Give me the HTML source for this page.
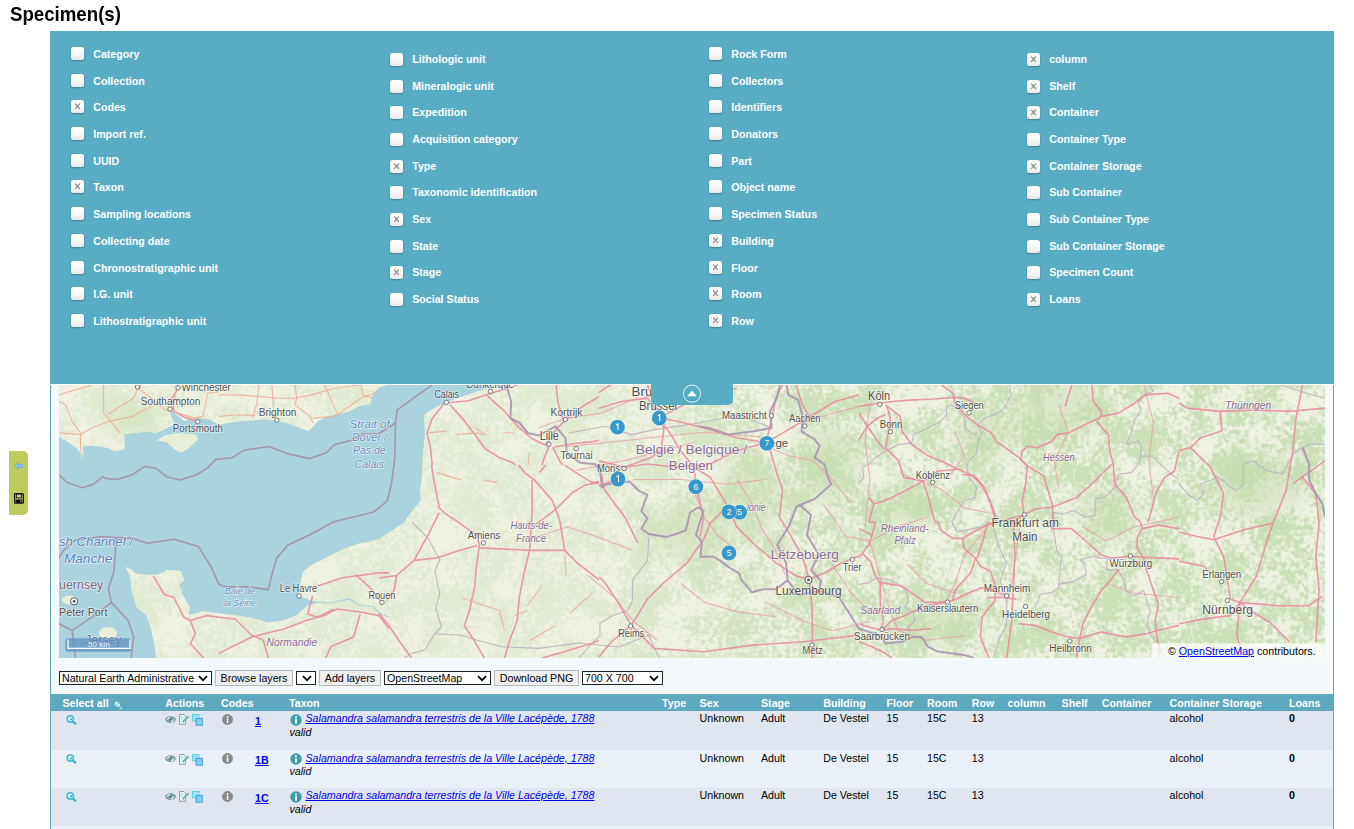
<!DOCTYPE html>
<html><head><meta charset="utf-8"><title>Specimen(s)</title><style>
*{box-sizing:border-box}
html,body{margin:0;padding:0;background:#fff;width:1354px;height:829px;overflow:hidden;font-family:"Liberation Sans",sans-serif}
.abs{position:absolute}
h1{position:absolute;left:10px;top:4px;margin:0;font:bold 18.67px/22px "Liberation Sans",sans-serif;color:#000;transform:scale(1.0,1.12);transform-origin:0 17.5px}
#panel{position:absolute;left:50px;top:31px;width:1284px;height:353px;background:#58adc5}
.cb{position:absolute;width:13px;height:13px;border-radius:2.5px;background:linear-gradient(#fff,#fafafa 45%,#e9e9e9);box-shadow:0 1px 2px rgba(0,0,0,.28)}
.lbl{position:absolute;font:bold 10.67px/14px "Liberation Sans",sans-serif;color:#fff;white-space:nowrap}
#wrap{position:absolute;left:50px;top:385px;width:1284px;height:444px;background:#f4fafb;border-left:1px solid #5aa7bd;border-right:1px solid #5aa7bd}
#map{position:absolute;left:59px;top:385px;width:1266px;height:273px;overflow:hidden;background:#eef0dd}
#tab{position:absolute;left:651px;top:384px;width:82px;height:21px;background:#58adc5;border-radius:0 0 5px 5px}
#side{position:absolute;left:9px;top:451px;width:19px;height:64px;background:#bfcb5d;border-radius:0 5px 5px 0}
.sel{position:absolute;top:671px;height:14px;border:1px solid #222;background:#fff;font:10.67px/12px "Liberation Sans",sans-serif;color:#000;padding-left:2px;white-space:nowrap;overflow:hidden}
.sel svg{position:absolute;right:3px;top:3px}
.btn{position:absolute;top:670px;height:16px;border:1px solid #b9b9b9;background:#efefef;font:10.67px/14px "Liberation Sans",sans-serif;color:#000;text-align:center;white-space:nowrap}
#thead{position:absolute;left:51px;top:694px;width:1282px;height:17px;background:#5ea9bf}
.th{position:absolute;top:697px;font:bold 10.67px/13px "Liberation Sans",sans-serif;color:#fff;white-space:nowrap}
.row{position:absolute;left:51px;width:1282px;height:38.5px}
.td{position:absolute;font:10.67px/13px "Liberation Sans",sans-serif;color:#000;white-space:nowrap}
a{color:#00e}
</style></head>
<body>
<h1>Specimen(s)</h1>
<div id="panel"></div>
<div class="cb" style="left:71px;top:47.0px"></div>
<div class="lbl" style="left:93.2px;top:46.5px">Category</div>
<div class="cb" style="left:71px;top:74.0px"></div>
<div class="lbl" style="left:93.2px;top:73.5px">Collection</div>
<div class="cb on" style="left:71px;top:100.0px"><svg width="13" height="13" viewBox="0 0 13 13" style="position:absolute;left:0;top:0"><path d="M4.1 3.7 L8.9 8.9 M8.9 3.7 L4.1 8.9" stroke="#858585" stroke-width="1.25"/></svg></div>
<div class="lbl" style="left:93.2px;top:99.5px">Codes</div>
<div class="cb" style="left:71px;top:127.0px"></div>
<div class="lbl" style="left:93.2px;top:126.5px">Import ref.</div>
<div class="cb" style="left:71px;top:154.0px"></div>
<div class="lbl" style="left:93.2px;top:153.5px">UUID</div>
<div class="cb on" style="left:71px;top:180.0px"><svg width="13" height="13" viewBox="0 0 13 13" style="position:absolute;left:0;top:0"><path d="M4.1 3.7 L8.9 8.9 M8.9 3.7 L4.1 8.9" stroke="#858585" stroke-width="1.25"/></svg></div>
<div class="lbl" style="left:93.2px;top:179.5px">Taxon</div>
<div class="cb" style="left:71px;top:207.0px"></div>
<div class="lbl" style="left:93.2px;top:206.5px">Sampling locations</div>
<div class="cb" style="left:71px;top:234.0px"></div>
<div class="lbl" style="left:93.2px;top:233.5px">Collecting date</div>
<div class="cb" style="left:71px;top:261.0px"></div>
<div class="lbl" style="left:93.2px;top:260.5px">Chronostratigraphic unit</div>
<div class="cb" style="left:71px;top:287.0px"></div>
<div class="lbl" style="left:93.2px;top:286.5px">I.G. unit</div>
<div class="cb" style="left:71px;top:314.0px"></div>
<div class="lbl" style="left:93.2px;top:313.5px">Lithostratigraphic unit</div>
<div class="cb" style="left:390px;top:53.0px"></div>
<div class="lbl" style="left:412.2px;top:51.5px">Lithologic unit</div>
<div class="cb" style="left:390px;top:80.0px"></div>
<div class="lbl" style="left:412.2px;top:78.5px">Mineralogic unit</div>
<div class="cb" style="left:390px;top:106.0px"></div>
<div class="lbl" style="left:412.2px;top:104.5px">Expedition</div>
<div class="cb" style="left:390px;top:133.0px"></div>
<div class="lbl" style="left:412.2px;top:131.5px">Acquisition category</div>
<div class="cb on" style="left:390px;top:160.0px"><svg width="13" height="13" viewBox="0 0 13 13" style="position:absolute;left:0;top:0"><path d="M4.1 3.7 L8.9 8.9 M8.9 3.7 L4.1 8.9" stroke="#858585" stroke-width="1.25"/></svg></div>
<div class="lbl" style="left:412.2px;top:158.5px">Type</div>
<div class="cb" style="left:390px;top:186.0px"></div>
<div class="lbl" style="left:412.2px;top:184.5px">Taxonomic identification</div>
<div class="cb on" style="left:390px;top:213.0px"><svg width="13" height="13" viewBox="0 0 13 13" style="position:absolute;left:0;top:0"><path d="M4.1 3.7 L8.9 8.9 M8.9 3.7 L4.1 8.9" stroke="#858585" stroke-width="1.25"/></svg></div>
<div class="lbl" style="left:412.2px;top:211.5px">Sex</div>
<div class="cb" style="left:390px;top:240.0px"></div>
<div class="lbl" style="left:412.2px;top:238.5px">State</div>
<div class="cb on" style="left:390px;top:266.0px"><svg width="13" height="13" viewBox="0 0 13 13" style="position:absolute;left:0;top:0"><path d="M4.1 3.7 L8.9 8.9 M8.9 3.7 L4.1 8.9" stroke="#858585" stroke-width="1.25"/></svg></div>
<div class="lbl" style="left:412.2px;top:264.5px">Stage</div>
<div class="cb" style="left:390px;top:293.0px"></div>
<div class="lbl" style="left:412.2px;top:291.5px">Social Status</div>
<div class="cb" style="left:709px;top:47.0px"></div>
<div class="lbl" style="left:731.2px;top:46.5px">Rock Form</div>
<div class="cb" style="left:709px;top:74.0px"></div>
<div class="lbl" style="left:731.2px;top:73.5px">Collectors</div>
<div class="cb" style="left:709px;top:100.0px"></div>
<div class="lbl" style="left:731.2px;top:99.5px">Identifiers</div>
<div class="cb" style="left:709px;top:127.0px"></div>
<div class="lbl" style="left:731.2px;top:126.5px">Donators</div>
<div class="cb" style="left:709px;top:154.0px"></div>
<div class="lbl" style="left:731.2px;top:153.5px">Part</div>
<div class="cb" style="left:709px;top:180.0px"></div>
<div class="lbl" style="left:731.2px;top:179.5px">Object name</div>
<div class="cb" style="left:709px;top:207.0px"></div>
<div class="lbl" style="left:731.2px;top:206.5px">Specimen Status</div>
<div class="cb on" style="left:709px;top:234.0px"><svg width="13" height="13" viewBox="0 0 13 13" style="position:absolute;left:0;top:0"><path d="M4.1 3.7 L8.9 8.9 M8.9 3.7 L4.1 8.9" stroke="#858585" stroke-width="1.25"/></svg></div>
<div class="lbl" style="left:731.2px;top:233.5px">Building</div>
<div class="cb on" style="left:709px;top:261.0px"><svg width="13" height="13" viewBox="0 0 13 13" style="position:absolute;left:0;top:0"><path d="M4.1 3.7 L8.9 8.9 M8.9 3.7 L4.1 8.9" stroke="#858585" stroke-width="1.25"/></svg></div>
<div class="lbl" style="left:731.2px;top:260.5px">Floor</div>
<div class="cb on" style="left:709px;top:287.0px"><svg width="13" height="13" viewBox="0 0 13 13" style="position:absolute;left:0;top:0"><path d="M4.1 3.7 L8.9 8.9 M8.9 3.7 L4.1 8.9" stroke="#858585" stroke-width="1.25"/></svg></div>
<div class="lbl" style="left:731.2px;top:286.5px">Room</div>
<div class="cb on" style="left:709px;top:314.0px"><svg width="13" height="13" viewBox="0 0 13 13" style="position:absolute;left:0;top:0"><path d="M4.1 3.7 L8.9 8.9 M8.9 3.7 L4.1 8.9" stroke="#858585" stroke-width="1.25"/></svg></div>
<div class="lbl" style="left:731.2px;top:313.5px">Row</div>
<div class="cb on" style="left:1027px;top:53.0px"><svg width="13" height="13" viewBox="0 0 13 13" style="position:absolute;left:0;top:0"><path d="M4.1 3.7 L8.9 8.9 M8.9 3.7 L4.1 8.9" stroke="#858585" stroke-width="1.25"/></svg></div>
<div class="lbl" style="left:1049.2px;top:51.5px">column</div>
<div class="cb on" style="left:1027px;top:80.0px"><svg width="13" height="13" viewBox="0 0 13 13" style="position:absolute;left:0;top:0"><path d="M4.1 3.7 L8.9 8.9 M8.9 3.7 L4.1 8.9" stroke="#858585" stroke-width="1.25"/></svg></div>
<div class="lbl" style="left:1049.2px;top:78.5px">Shelf</div>
<div class="cb on" style="left:1027px;top:106.0px"><svg width="13" height="13" viewBox="0 0 13 13" style="position:absolute;left:0;top:0"><path d="M4.1 3.7 L8.9 8.9 M8.9 3.7 L4.1 8.9" stroke="#858585" stroke-width="1.25"/></svg></div>
<div class="lbl" style="left:1049.2px;top:104.5px">Container</div>
<div class="cb" style="left:1027px;top:133.0px"></div>
<div class="lbl" style="left:1049.2px;top:131.5px">Container Type</div>
<div class="cb on" style="left:1027px;top:160.0px"><svg width="13" height="13" viewBox="0 0 13 13" style="position:absolute;left:0;top:0"><path d="M4.1 3.7 L8.9 8.9 M8.9 3.7 L4.1 8.9" stroke="#858585" stroke-width="1.25"/></svg></div>
<div class="lbl" style="left:1049.2px;top:158.5px">Container Storage</div>
<div class="cb" style="left:1027px;top:186.0px"></div>
<div class="lbl" style="left:1049.2px;top:184.5px">Sub Container</div>
<div class="cb" style="left:1027px;top:213.0px"></div>
<div class="lbl" style="left:1049.2px;top:211.5px">Sub Container Type</div>
<div class="cb" style="left:1027px;top:240.0px"></div>
<div class="lbl" style="left:1049.2px;top:238.5px">Sub Container Storage</div>
<div class="cb" style="left:1027px;top:266.0px"></div>
<div class="lbl" style="left:1049.2px;top:264.5px">Specimen Count</div>
<div class="cb on" style="left:1027px;top:293.0px"><svg width="13" height="13" viewBox="0 0 13 13" style="position:absolute;left:0;top:0"><path d="M4.1 3.7 L8.9 8.9 M8.9 3.7 L4.1 8.9" stroke="#858585" stroke-width="1.25"/></svg></div>
<div class="lbl" style="left:1049.2px;top:291.5px">Loans</div>
<div id="wrap"></div>
<div id="map"><svg width="1266" height="273" viewBox="0 0 1266 273" style="display:block">
<defs>
<filter id="tex" x="0" y="0" width="100%" height="100%" color-interpolation-filters="sRGB">
<feTurbulence type="fractalNoise" baseFrequency="0.22" numOctaves="2" seed="3" result="fine"/>
<feTurbulence type="fractalNoise" baseFrequency="0.03" numOctaves="2" seed="11" result="coarse"/>
<feComposite in="fine" in2="coarse" operator="arithmetic" k1="0" k2="0.55" k3="0.6" k4="-0.02" result="mix"/>
<feColorMatrix in="mix" type="matrix" values="0 0 0 0 0.74  0 0 0 0 0.85  0 0 0 0 0.65  -6 0 0 0 3.4" result="g"/>
<feComposite in="g" in2="SourceAlpha" operator="in"/>
</filter>
<linearGradient id="eastg" x1="0" y1="0" x2="1" y2="0"><stop offset="0" stop-color="#fff" stop-opacity="0.35"/><stop offset="0.4" stop-color="#fff" stop-opacity="0.4"/><stop offset="0.6" stop-color="#fff" stop-opacity="0.9"/><stop offset="1" stop-color="#fff" stop-opacity="1"/></linearGradient>
<mask id="em"><rect width="1266" height="273" fill="url(#eastg)"/></mask>
<filter id="blr" x="-50%" y="-50%" width="200%" height="200%"><feGaussianBlur stdDeviation="9"/></filter>
<mask id="fm"><g filter="url(#blr)" fill="#fff">
<ellipse cx="630" cy="145" rx="38" ry="28"/><ellipse cx="690" cy="110" rx="30" ry="40"/>
<ellipse cx="890" cy="235" rx="35" ry="22"/><ellipse cx="850" cy="125" rx="30" ry="20"/>
<ellipse cx="1050" cy="130" rx="30" ry="25"/><ellipse cx="1000" cy="25" rx="50" ry="25"/>
<ellipse cx="770" cy="80" rx="30" ry="40"/><ellipse cx="70" cy="35" rx="30" ry="15"/>
<ellipse cx="1200" cy="100" rx="45" ry="30"/><ellipse cx="925" cy="50" rx="30" ry="25"/>
</g></mask>
</defs>
<rect width="1266" height="273" fill="#eff2e1"/>
<g mask="url(#em)"><rect width="1266" height="273" fill="#000" filter="url(#tex)" opacity="0.75"/></g><g mask="url(#fm)"><rect width="1266" height="273" fill="#c3d9ab" opacity="0.45"/></g>
<polygon points="0.0,273.0 0.0,52.6 10.0,58.0 16.5,62.8 19.8,66.0 23.0,74.4 24.8,71.0 24.0,62.0 33.0,61.0 49.6,63.6 57.0,67.0 66.0,64.5 66.0,49.6 74.0,48.8 87.6,47.0 97.5,48.8 105.8,44.6 115.7,39.7 110.7,24.8 125.6,36.4 137.0,33.0 150.0,35.0 160.0,40.0 176.5,37.2 206.3,34.7 226.0,38.0 239.3,43.0 250.0,46.6 259.2,36.4 267.4,32.2 289.0,27.3 300.5,21.5 312.0,19.8 313.7,10.0 320.0,3.3 330.0,0.0 446.0,0.0 427.4,3.3 414.0,7.4 399.0,12.4 386.0,17.4 374.5,23.0 364.6,29.8 365.5,48.0 363.8,66.0 363.0,77.7 362.0,95.9 360.5,105.8 361.3,115.7 353.0,125.6 344.8,137.0 330.0,146.9 320.0,153.4 299.6,158.3 283.2,164.1 266.7,172.3 252.0,179.7 243.7,186.3 240.5,199.4 238.8,210.9 252.0,215.8 258.5,217.5 248.7,220.0 238.8,229.0 225.7,234.7 209.3,237.2 192.8,232.2 176.4,229.8 160.0,228.1 144.5,225.7 129.7,229.8 131.4,222.4 124.8,210.9 120.7,200.2 125.6,194.5 121.5,185.4 108.4,184.6 98.5,189.2 88.7,189.5 77.2,187.9 72.2,183.8 65.7,181.3 70.6,191.2 72.2,206.0 77.2,222.4 87.0,230.6 92.0,245.4 95.2,261.8 96.9,273.0" fill="#aad3df" stroke="#a5cdd9" stroke-width="0.6"/>
<polygon points="97.5,55.4 105.8,50.4 119.0,48.0 137.0,49.6 138.8,54.5 130.6,62.8 122.3,67.8 115.7,64.5 107.4,57.0" fill="#e8efd8"/>
<ellipse cx="11" cy="215" rx="8" ry="4.5" fill="#e8efd8"/><ellipse cx="49" cy="248" rx="9" ry="6" fill="#e8efd8"/><ellipse cx="44" cy="175" rx="3" ry="1.5" fill="#e8efd8"/>
<polyline points="252,217 270,218 290,214 300,220 315,222 320,228 330,232" fill="none" stroke="#aad3df" stroke-width="1.2"/>
<polyline points="0.0,90.0 8.3,97.5 23.0,102.8 34.7,99.2 43.8,91.7 46.3,93.4 57.9,94.5 72.7,90.0 86.0,81.3 97.5,83.5 107.4,91.7 120.7,95.0 137.2,90.0 148.8,82.6 157.0,74.4 173.2,72.7 184.8,65.3 209.6,61.5 231.0,69.4 251.0,73.6 267.4,67.8 275.7,59.5 292.2,55.4 303.8,48.8 320.0,48.5 336.5,38.0" fill="none" stroke="#a496ae" stroke-width="1.6" stroke-linejoin="round"/>
<polyline points="372.9,0.0 338.2,24.8 336.5,38.0 335.7,74.4 332.4,99.2 328.3,115.7 320.0,123.0 313.7,127.3 274.0,137.0 252.0,149.3 229.0,160.0 217.5,173.1 212.5,191.2 209.3,204.6 189.6,201.9 168.2,201.9 160.0,199.4 152.7,183.0 139.6,161.6 115.0,154.2 88.7,158.3 73.9,153.4 41.0,151.8 16.4,155.0 5.0,165.0 0.0,173.0" fill="none" stroke="#a496ae" stroke-width="1.6" stroke-linejoin="round"/>
<polyline points="56.7,152.0 56.7,161.6 55.0,186.3 49.3,204.3 52.5,217.5 69.0,235.5 74.7,252.0 72.2,273.0" fill="none" stroke="#a496ae" stroke-width="1.6" stroke-linejoin="round"/>
<polyline points="52.5,217.5 32.8,232.2 13.1,245.4 0.0,238.8" fill="none" stroke="#a496ae" stroke-width="1.6" stroke-linejoin="round"/>
<polyline points="13.1,245.4 16.4,273.0" fill="none" stroke="#a496ae" stroke-width="1.6" stroke-linejoin="round"/>
<polyline points="352.8,137.0 369.3,153.4 380.8,174.8 375.8,186.3 380.8,209.2 376.6,222.4 382.4,242.0 375.8,248.7 366.0,265.0 352.8,268.4 345.0,273.0" fill="none" stroke="#c0b0c4" stroke-width="1.1" stroke-linejoin="round" opacity="0.9"/>
<polyline points="375.8,248.7 402.0,250.3 418.5,255.2 443.0,261.8 480.0,263.4 520.0,258.0 560.0,262.0 589.7,250.0 600.0,273.0" fill="none" stroke="#c0b0c4" stroke-width="1.1" stroke-linejoin="round" opacity="0.9"/>
<polyline points="509.8,48.0 546.0,41.3 572.6,49.6 595.7,44.6 640.0,38.0 680.0,30.0 712.7,43.0" fill="none" stroke="#c0b0c4" stroke-width="1.1" stroke-linejoin="round" opacity="0.9"/>
<polyline points="589.7,152.6 588.6,175.4 573.5,195.5 573.5,215.6 568.5,225.6 553.4,230.7 540.9,238.2 540.9,250.7 530.8,260.8 520.0,273.0" fill="none" stroke="#c0b0c4" stroke-width="1.1" stroke-linejoin="round" opacity="0.9"/>
<polyline points="950.4,0.0 952.1,9.9 945.5,23.1 935.5,29.8 925.6,33.1 919.0,39.7 922.3,47.9 919.0,57.9 917.4,69.4 910.7,74.4 907.4,82.6 910.7,92.6 917.4,102.5 915.7,112.4 905.8,115.7 899.2,125.6 892.6,137.0 898.5,146.8 914.9,143.6 928.0,140.3" fill="none" stroke="#c0b0c4" stroke-width="1.1" stroke-linejoin="round" opacity="0.9"/>
<polyline points="800.0,97.5 805.0,92.6 803.3,82.6 809.9,79.3 816.5,72.7 826.4,66.1 839.7,59.5 852.9,57.9 854.5,49.6 869.4,43.0 881.0,36.4 887.6,29.8 887.6,21.5 892.6,19.8 899.2,24.8 905.8,33.1 905.8,43.0 915.7,49.6 919.0,47.9" fill="none" stroke="#c0b0c4" stroke-width="1.1" stroke-linejoin="round" opacity="0.9"/>
<polyline points="800.0,199.4 809.8,197.7 818.0,192.8 829.5,194.4 839.4,199.4 847.6,205.9 849.2,215.8 845.9,222.3 854.2,227.3 855.8,235.5 849.2,242.0 850.9,250.2" fill="none" stroke="#c0b0c4" stroke-width="1.1" stroke-linejoin="round" opacity="0.9"/>
<polyline points="934.6,141.9 939.5,161.6 947.7,178.0 944.4,186.2 941.1,196.1 944.4,205.9 947.7,219.0 947.7,238.7 941.1,251.9 934.6,273.0" fill="none" stroke="#c0b0c4" stroke-width="1.1" stroke-linejoin="round" opacity="0.9"/>
<polyline points="1090.6,0.0 1093.9,6.6 1085.6,9.9 1079.0,18.2 1082.3,24.8 1075.7,34.7 1072.4,46.3 1067.4,59.5 1079.0,56.2 1082.3,62.8 1080.7,77.7 1072.4,87.6 1059.2,89.3 1055.9,102.5 1046.0,112.4 1036.0,114.0 1036.0,130.6 1026.1,132.2 1014.5,125.6 1004.6,128.9 993.1,127.3 994.5,143.6 997.7,164.9 1002.7,171.5 1001.0,186.2 999.4,202.6 992.8,207.6 981.3,209.2 976.4,222.3" fill="none" stroke="#c0b0c4" stroke-width="1.1" stroke-linejoin="round" opacity="0.9"/>
<polyline points="1082.3,71.1 1092.2,71.1 1105.5,82.6 1112.1,89.3 1120.0,94.2" fill="none" stroke="#c0b0c4" stroke-width="1.1" stroke-linejoin="round" opacity="0.9"/>
<polyline points="999.4,199.4 1015.8,196.1 1027.3,189.5 1025.6,178.0 1020.7,174.7 1033.8,171.5 1042.0,173.1 1048.6,173.1 1047.0,184.6 1058.5,184.6 1065.0,194.4 1066.6,205.9 1074.9,210.8 1084.7,205.9 1088.0,215.8 1091.3,225.6 1088.0,238.7 1091.3,250.2 1099.5,258.4 1105.0,273.0" fill="none" stroke="#c0b0c4" stroke-width="1.1" stroke-linejoin="round" opacity="0.9"/>
<polyline points="1221.7,0.0 1241.9,6.6 1265.6,13.2" fill="none" stroke="#c0b0c4" stroke-width="1.1" stroke-linejoin="round" opacity="0.9"/>
<polyline points="1120.0,98.3 1128.3,108.7 1138.2,115.3 1144.8,108.7 1141.5,98.8 1151.4,95.5 1158.0,92.2 1164.6,95.5 1171.2,102.1 1177.8,105.4 1184.3,98.8 1184.3,79.1 1194.2,75.8 1207.4,85.6 1223.9,88.9 1230.5,75.8 1237.0,65.9 1250.2,59.3 1266.0,59.3" fill="none" stroke="#c0b0c4" stroke-width="1.1" stroke-linejoin="round" opacity="0.9"/>
<polyline points="94.4,191.2 105.1,209.2 114.9,212.5 124.8,232.2 131.4,235.5 136.3,248.7 131.4,258.5 144.5,273.0" fill="none" stroke="#e78ea1" stroke-width="1.6" stroke-linejoin="round" opacity="0.9"/>
<polyline points="131.4,235.5 147.8,230.6 160.0,232.2 176.0,234.0 192.8,250.3 204.3,255.2 209.3,273.0" fill="none" stroke="#e78ea1" stroke-width="1.6" stroke-linejoin="round" opacity="0.9"/>
<polyline points="160.0,268.4 192.8,252.0 225.7,243.7 247.0,235.5 265.1,230.6 278.2,224.0 302.9,227.3 320.0,230.6 329.9,243.7 330.0,243.8" fill="none" stroke="#e78ea1" stroke-width="1.6" stroke-linejoin="round" opacity="0.9"/>
<polyline points="258.5,201.0 283.2,192.8 307.8,189.5 320.0,187.9 330.0,187.9" fill="none" stroke="#e78ea1" stroke-width="1.6" stroke-linejoin="round" opacity="0.9"/>
<polyline points="253.6,210.9 248.7,229.0 258.5,232.2 274.9,224.0" fill="none" stroke="#e78ea1" stroke-width="1.6" stroke-linejoin="round" opacity="0.9"/>
<polyline points="301.2,229.0 294.6,252.0 271.7,261.8 266.7,273.0" fill="none" stroke="#e78ea1" stroke-width="1.6" stroke-linejoin="round" opacity="0.9"/>
<polyline points="296.3,189.5 311.1,202.7 323.0,217.5" fill="none" stroke="#e78ea1" stroke-width="1.6" stroke-linejoin="round" opacity="0.9"/>
<polyline points="119.0,2.8 113.0,14.0 115.0,26.0 125.0,32.0 138.8,36.7" fill="none" stroke="#e78ea1" stroke-width="1.6" stroke-linejoin="round" opacity="0.9"/>
<polyline points="387.4,17.7 408.6,16.0 429.9,8.9 447.6,3.5 458.2,0.0" fill="none" stroke="#e78ea1" stroke-width="1.6" stroke-linejoin="round" opacity="0.9"/>
<polyline points="385.6,17.7 373.2,33.7 367.9,47.9 371.4,62.0 373.2,79.8 373.2,80.0" fill="none" stroke="#e78ea1" stroke-width="1.6" stroke-linejoin="round" opacity="0.9"/>
<polyline points="390.9,19.5 405.1,35.4 415.7,49.6 426.3,63.8 440.5,72.7 454.7,78.0 456.3,80.0" fill="none" stroke="#e78ea1" stroke-width="1.6" stroke-linejoin="round" opacity="0.9"/>
<polyline points="428.1,10.6 444.1,24.8 458.2,40.8 472.4,53.2 486.6,60.3" fill="none" stroke="#e78ea1" stroke-width="1.6" stroke-linejoin="round" opacity="0.9"/>
<polyline points="486.6,60.3 497.2,44.3 506.1,35.4 523.8,21.3 540.0,11.8" fill="none" stroke="#e78ea1" stroke-width="1.6" stroke-linejoin="round" opacity="0.9"/>
<polyline points="490.2,60.3 484.8,74.4 482.8,80.0" fill="none" stroke="#e78ea1" stroke-width="1.6" stroke-linejoin="round" opacity="0.9"/>
<polyline points="493.7,62.0 500.8,76.2 503.8,80.0" fill="none" stroke="#e78ea1" stroke-width="1.6" stroke-linejoin="round" opacity="0.9"/>
<polyline points="495.5,62.0 515.0,58.5 532.7,56.7 540.0,55.3" fill="none" stroke="#e78ea1" stroke-width="1.6" stroke-linejoin="round" opacity="0.9"/>
<polyline points="497.2,0.0 499.0,17.7 504.3,35.4" fill="none" stroke="#e78ea1" stroke-width="1.6" stroke-linejoin="round" opacity="0.9"/>
<polyline points="372.5,80.0 374.0,90.1 380.2,122.7 385.3,127.8 400.3,137.8 417.9,150.3 420.4,160.4 417.9,178.0 415.4,203.1 410.4,225.6 405.3,240.7 415.4,255.8 425.4,273.1" fill="none" stroke="#e78ea1" stroke-width="1.6" stroke-linejoin="round" opacity="0.9"/>
<polyline points="417.9,160.4 400.3,165.4 377.7,172.9 355.1,175.4 337.6,190.5 320.0,193.0" fill="none" stroke="#e78ea1" stroke-width="1.6" stroke-linejoin="round" opacity="0.9"/>
<polyline points="380.2,127.8 370.2,147.8 357.7,170.4 355.1,175.4" fill="none" stroke="#e78ea1" stroke-width="1.6" stroke-linejoin="round" opacity="0.9"/>
<polyline points="337.6,190.5 335.1,205.6 327.5,215.6" fill="none" stroke="#e78ea1" stroke-width="1.6" stroke-linejoin="round" opacity="0.9"/>
<polyline points="473.1,95.1 473.1,127.8 470.6,165.4 465.6,185.5 460.6,210.6 458.1,235.7 450.5,255.8 445.5,273.1" fill="none" stroke="#e78ea1" stroke-width="1.6" stroke-linejoin="round" opacity="0.9"/>
<polyline points="420.4,162.9 445.5,164.1 470.6,165.4 505.7,165.4 518.3,178.0 540.0,194.8" fill="none" stroke="#e78ea1" stroke-width="1.6" stroke-linejoin="round" opacity="0.9"/>
<polyline points="459.5,80.0 465.6,87.6 475.6,95.1 493.2,115.2 500.7,135.3 505.7,165.4" fill="none" stroke="#e78ea1" stroke-width="1.6" stroke-linejoin="round" opacity="0.9"/>
<polyline points="475.6,140.3 495.7,125.2 513.3,107.7 525.8,100.1 538.4,97.6 540.0,96.5" fill="none" stroke="#e78ea1" stroke-width="1.6" stroke-linejoin="round" opacity="0.9"/>
<polyline points="480.6,87.6 486.7,80.0" fill="none" stroke="#e78ea1" stroke-width="1.6" stroke-linejoin="round" opacity="0.9"/>
<polyline points="505.7,80.0 505.7,80.1 520.8,90.1 533.4,97.6 540.0,99.0" fill="none" stroke="#e78ea1" stroke-width="1.6" stroke-linejoin="round" opacity="0.9"/>
<polyline points="540.0,255.4 533.4,258.3 508.3,265.8 483.2,273.1" fill="none" stroke="#e78ea1" stroke-width="1.6" stroke-linejoin="round" opacity="0.9"/>
<polyline points="533.4,97.6 540.0,96.7" fill="none" stroke="#e78ea1" stroke-width="1.6" stroke-linejoin="round" opacity="0.9"/>
<polyline points="320.0,228.2 330.0,240.7 340.1,255.8 352.6,273.1" fill="none" stroke="#e78ea1" stroke-width="1.6" stroke-linejoin="round" opacity="0.9"/>
<polyline points="540.0,23.2 562.3,16.5 588.6,13.2 600.2,29.6" fill="none" stroke="#e78ea1" stroke-width="1.6" stroke-linejoin="round" opacity="0.9"/>
<polyline points="540.0,7.5 545.8,3.3 552.4,0.0" fill="none" stroke="#e78ea1" stroke-width="1.6" stroke-linejoin="round" opacity="0.9"/>
<polyline points="540.0,75.9 565.6,82.3 591.9,72.4 601.8,65.8 605.1,42.8 600.2,32.9" fill="none" stroke="#e78ea1" stroke-width="1.6" stroke-linejoin="round" opacity="0.9"/>
<polyline points="600.2,32.9 618.3,36.2 644.6,42.8 677.5,52.7 707.2,57.6" fill="none" stroke="#e78ea1" stroke-width="1.6" stroke-linejoin="round" opacity="0.9"/>
<polyline points="600.2,32.9 611.7,49.4 621.6,65.8 634.7,82.3 651.2,92.2 661.1,108.6 670.9,125.1 677.5,141.6 694.0,158.0 717.0,177.8 736.8,190.9 750.0,194.2" fill="none" stroke="#e78ea1" stroke-width="1.6" stroke-linejoin="round" opacity="0.9"/>
<polyline points="565.6,82.3 588.6,79.0 618.3,82.3 651.2,79.0 677.5,65.8 707.2,57.6" fill="none" stroke="#e78ea1" stroke-width="1.6" stroke-linejoin="round" opacity="0.9"/>
<polyline points="707.2,57.6 726.9,46.1 743.4,36.2 759.8,26.3 776.3,16.5 800.0,9.9" fill="none" stroke="#e78ea1" stroke-width="1.6" stroke-linejoin="round" opacity="0.9"/>
<polyline points="707.2,57.6 710.5,42.8 713.7,29.6 717.0,13.2 723.6,0.0" fill="none" stroke="#e78ea1" stroke-width="1.6" stroke-linejoin="round" opacity="0.9"/>
<polyline points="710.5,62.6 717.0,85.6 723.6,105.3 720.3,131.7 730.2,148.1 743.4,171.2 750.0,194.2" fill="none" stroke="#e78ea1" stroke-width="1.6" stroke-linejoin="round" opacity="0.9"/>
<polyline points="736.8,0.0 743.4,19.8 753.3,36.2" fill="none" stroke="#e78ea1" stroke-width="1.6" stroke-linejoin="round" opacity="0.9"/>
<polyline points="750.0,194.2 753.3,223.9 753.3,256.8 753.3,272.9" fill="none" stroke="#e78ea1" stroke-width="1.6" stroke-linejoin="round" opacity="0.9"/>
<polyline points="572.2,240.3 588.6,214.0 605.1,197.5 628.1,177.8 644.6,154.7 651.2,138.3 664.4,125.1" fill="none" stroke="#e78ea1" stroke-width="1.6" stroke-linejoin="round" opacity="0.9"/>
<polyline points="572.2,240.3 552.4,256.8 540.0,272.0" fill="none" stroke="#e78ea1" stroke-width="1.6" stroke-linejoin="round" opacity="0.9"/>
<polyline points="572.2,240.3 595.2,263.4 644.6,266.7 694.0,260.1 743.4,256.8 800.0,250.2" fill="none" stroke="#e78ea1" stroke-width="1.6" stroke-linejoin="round" opacity="0.9"/>
<polyline points="540.0,191.7 545.8,197.5 559.0,217.3 572.2,240.3" fill="none" stroke="#e78ea1" stroke-width="1.6" stroke-linejoin="round" opacity="0.9"/>
<polyline points="540.0,101.1 562.3,92.2" fill="none" stroke="#e78ea1" stroke-width="1.6" stroke-linejoin="round" opacity="0.9"/>
<polyline points="750.0,194.2 766.4,187.7 782.9,177.8 800.0,171.2" fill="none" stroke="#e78ea1" stroke-width="1.6" stroke-linejoin="round" opacity="0.9"/>
<polyline points="634.7,82.3 638.0,105.3 644.6,131.7 641.3,151.4" fill="none" stroke="#e78ea1" stroke-width="1.6" stroke-linejoin="round" opacity="0.9"/>
<polyline points="600.2,32.9 588.6,0.0" fill="none" stroke="#e78ea1" stroke-width="1.6" stroke-linejoin="round" opacity="0.9"/>
<polyline points="600.2,32.9 624.9,19.8 651.2,9.9 677.5,3.3" fill="none" stroke="#e78ea1" stroke-width="1.6" stroke-linejoin="round" opacity="0.9"/>
<polyline points="540.0,79.1 545.8,105.3 565.6,131.7 578.8,158.0" fill="none" stroke="#e78ea1" stroke-width="1.6" stroke-linejoin="round" opacity="0.9"/>
<polyline points="819.8,18.2 833.1,16.5 854.5,14.9 874.4,14.0 894.2,12.4 905.8,13.2 915.7,18.2" fill="none" stroke="#e78ea1" stroke-width="1.6" stroke-linejoin="round" opacity="0.9"/>
<polyline points="882.6,0.0 894.2,8.3 895.9,18.2 907.4,31.4 920.7,41.3 932.2,47.9 937.2,56.2 948.8,64.5 960.0,72.7 968.3,81.0" fill="none" stroke="#e78ea1" stroke-width="1.6" stroke-linejoin="round" opacity="0.9"/>
<polyline points="826.4,19.8 841.3,31.4 843.0,46.3 852.9,59.5 869.4,71.1 886.0,77.7 899.2,84.3 912.4,90.1 922.3,99.2 930.6,115.7 937.2,137.0 928.0,138.6" fill="none" stroke="#e78ea1" stroke-width="1.6" stroke-linejoin="round" opacity="0.9"/>
<polyline points="800.0,21.5 819.8,18.2" fill="none" stroke="#e78ea1" stroke-width="1.6" stroke-linejoin="round" opacity="0.9"/>
<polyline points="828.1,21.5 831.4,33.1 829.8,46.3 826.4,62.8 833.1,69.4 839.7,76.0 844.6,92.6 864.5,95.9 879.3,86.0 899.2,84.3" fill="none" stroke="#e78ea1" stroke-width="1.6" stroke-linejoin="round" opacity="0.9"/>
<polyline points="800.0,28.1 808.3,41.3 816.5,52.9 824.8,64.5" fill="none" stroke="#e78ea1" stroke-width="1.6" stroke-linejoin="round" opacity="0.9"/>
<polyline points="800.0,54.5 808.3,41.3 818.2,33.1 826.4,29.8" fill="none" stroke="#e78ea1" stroke-width="1.6" stroke-linejoin="round" opacity="0.9"/>
<polyline points="864.5,95.9 846.3,105.8 829.8,114.0 814.9,119.0 809.9,112.4" fill="none" stroke="#e78ea1" stroke-width="1.6" stroke-linejoin="round" opacity="0.9"/>
<polyline points="814.9,119.0 809.9,137.0 816.4,137.0 813.1,150.1 809.8,160.0 803.3,168.2 800.0,171.5" fill="none" stroke="#e78ea1" stroke-width="1.6" stroke-linejoin="round" opacity="0.9"/>
<polyline points="864.5,97.5 869.4,112.4 872.7,125.6 876.0,137.0 878.8,137.0 882.0,145.2 893.5,153.4 903.4,153.4 905.0,163.3 916.5,173.1 911.6,187.9 896.8,204.3 893.5,215.8" fill="none" stroke="#e78ea1" stroke-width="1.6" stroke-linejoin="round" opacity="0.9"/>
<polyline points="902.5,89.3 915.7,90.9 925.6,102.5 932.2,119.0 937.2,132.2" fill="none" stroke="#e78ea1" stroke-width="1.6" stroke-linejoin="round" opacity="0.9"/>
<polyline points="800.0,143.6 813.1,150.1" fill="none" stroke="#e78ea1" stroke-width="1.6" stroke-linejoin="round" opacity="0.9"/>
<polyline points="803.3,168.2 811.5,176.4 816.4,191.2 821.3,197.7 832.8,199.4 842.7,201.0 852.5,207.6 865.6,217.4 878.8,217.4 893.5,215.8 906.7,209.2 923.1,202.6 947.7,210.8" fill="none" stroke="#e78ea1" stroke-width="1.6" stroke-linejoin="round" opacity="0.9"/>
<polyline points="916.5,173.1 921.4,181.3 931.3,186.2 936.2,199.4 936.2,215.8 928.0,225.6 923.1,232.2 921.4,251.9 928.0,268.3 930.0,273.0" fill="none" stroke="#e78ea1" stroke-width="1.6" stroke-linejoin="round" opacity="0.9"/>
<polyline points="903.4,153.4 914.9,146.8 928.0,140.3 965.5,129.6" fill="none" stroke="#e78ea1" stroke-width="1.6" stroke-linejoin="round" opacity="0.9"/>
<polyline points="928.0,138.6 924.7,153.4 918.1,173.1" fill="none" stroke="#e78ea1" stroke-width="1.6" stroke-linejoin="round" opacity="0.9"/>
<polyline points="821.3,197.7 821.3,222.3 824.6,235.5 821.3,245.3" fill="none" stroke="#e78ea1" stroke-width="1.6" stroke-linejoin="round" opacity="0.9"/>
<polyline points="823.0,245.3 832.8,235.5 846.0,230.5 854.2,226.4 868.9,220.7 888.6,217.1" fill="none" stroke="#e78ea1" stroke-width="1.6" stroke-linejoin="round" opacity="0.9"/>
<polyline points="800.0,238.7 809.8,242.0 823.0,245.3 832.8,243.7 854.2,245.3 872.2,243.7" fill="none" stroke="#e78ea1" stroke-width="1.6" stroke-linejoin="round" opacity="0.9"/>
<polyline points="800.0,256.8 813.1,261.7 826.3,268.3 832.8,273.0" fill="none" stroke="#e78ea1" stroke-width="1.6" stroke-linejoin="round" opacity="0.9"/>
<polyline points="965.0,129.6 954.3,137.0 955.9,169.8 954.3,202.6 952.6,235.5 947.7,273.0" fill="none" stroke="#e78ea1" stroke-width="1.6" stroke-linejoin="round" opacity="0.9"/>
<polyline points="928.0,212.5 944.4,212.5 957.5,214.1" fill="none" stroke="#e78ea1" stroke-width="1.6" stroke-linejoin="round" opacity="0.9"/>
<polyline points="1032.7,0.0 1034.4,16.5 1042.6,26.4 1041.0,33.1 1029.4,38.0 1009.6,47.9 998.0,49.6 993.1,56.2 978.2,62.8 968.3,61.2 963.3,66.1 961.7,74.4 968.3,81.0 966.6,99.2 963.3,115.7 965.0,129.6" fill="none" stroke="#e78ea1" stroke-width="1.6" stroke-linejoin="round" opacity="0.9"/>
<polyline points="1042.6,31.4 1059.2,28.1 1075.7,18.2 1085.6,9.9 1108.8,8.3 1120.0,13.2" fill="none" stroke="#e78ea1" stroke-width="1.6" stroke-linejoin="round" opacity="0.9"/>
<polyline points="1037.7,36.4 1049.3,49.6 1050.9,66.1 1054.2,79.3 1055.9,99.2 1067.4,112.4 1075.7,132.2 1081.4,137.0 1083.1,143.6 1078.1,153.4 1078.1,163.3 1084.7,173.1 1088.0,186.2 1094.6,205.9 1099.5,219.0 1096.2,235.5 1097.8,251.9 1099.5,258.4 1100.0,273.0" fill="none" stroke="#e78ea1" stroke-width="1.6" stroke-linejoin="round" opacity="0.9"/>
<polyline points="1052.6,79.3 1034.4,97.5 1017.9,112.4 993.1,122.3 976.5,124.0 965.5,129.6" fill="none" stroke="#e78ea1" stroke-width="1.6" stroke-linejoin="round" opacity="0.9"/>
<polyline points="968.3,81.0 984.8,90.9 988.1,102.5 993.1,119.0 994.7,137.0 992.8,143.6 1012.5,143.6 1025.6,155.0 1042.0,169.8 1051.9,173.1 1071.6,171.5 1084.7,172.3 1104.4,173.1 1120.0,173.9" fill="none" stroke="#e78ea1" stroke-width="1.6" stroke-linejoin="round" opacity="0.9"/>
<polyline points="1012.9,0.0 1009.6,9.9 1006.3,21.5" fill="none" stroke="#e78ea1" stroke-width="1.6" stroke-linejoin="round" opacity="0.9"/>
<polyline points="1120.0,66.1 1115.4,86.0 1105.5,92.6 1097.2,107.4 1090.6,132.2 1088.9,137.0" fill="none" stroke="#e78ea1" stroke-width="1.6" stroke-linejoin="round" opacity="0.9"/>
<polyline points="1083.1,143.6 1099.5,140.3 1120.0,143.6" fill="none" stroke="#e78ea1" stroke-width="1.6" stroke-linejoin="round" opacity="0.9"/>
<polyline points="1060.1,184.6 1051.9,194.4 1042.0,205.9 1032.2,222.3 1024.0,238.7 1020.7,253.5 1017.4,273.0" fill="none" stroke="#e78ea1" stroke-width="1.6" stroke-linejoin="round" opacity="0.9"/>
<polyline points="960.0,238.7 976.4,240.4 992.8,246.9 1009.2,251.9 1020.7,253.5 1042.0,246.9 1066.6,251.9 1088.0,248.6 1099.5,245.3 1120.0,240.4" fill="none" stroke="#e78ea1" stroke-width="1.6" stroke-linejoin="round" opacity="0.9"/>
<polyline points="1120.0,18.0 1128.3,23.1 1161.3,26.4 1194.2,24.7 1230.5,26.4 1266.0,23.1" fill="none" stroke="#e78ea1" stroke-width="1.6" stroke-linejoin="round" opacity="0.9"/>
<polyline points="1161.3,26.4 1162.9,46.1 1141.5,52.7 1131.6,62.6 1120.0,65.5" fill="none" stroke="#e78ea1" stroke-width="1.6" stroke-linejoin="round" opacity="0.9"/>
<polyline points="1131.6,62.6 1151.4,82.3 1164.6,108.7 1161.3,131.8 1154.7,151.5 1164.6,171.3 1167.9,191.0 1171.2,214.1 1181.0,217.4 1197.5,191.0 1207.4,158.1 1214.0,138.3 1227.2,105.4 1233.7,65.9 1237.0,32.9 1243.6,0.0" fill="none" stroke="#e78ea1" stroke-width="1.6" stroke-linejoin="round" opacity="0.9"/>
<polyline points="1120.0,147.0 1138.2,151.5 1154.7,154.8 1184.3,144.9 1214.0,138.3" fill="none" stroke="#e78ea1" stroke-width="1.6" stroke-linejoin="round" opacity="0.9"/>
<polyline points="1120.0,176.2 1144.8,181.2 1151.4,187.7" fill="none" stroke="#e78ea1" stroke-width="1.6" stroke-linejoin="round" opacity="0.9"/>
<polyline points="1120.0,238.8 1128.3,237.2 1144.8,233.9 1171.2,230.6 1181.0,217.4" fill="none" stroke="#e78ea1" stroke-width="1.6" stroke-linejoin="round" opacity="0.9"/>
<polyline points="1181.0,217.4 1194.2,227.3 1210.7,237.2 1230.5,256.9" fill="none" stroke="#e78ea1" stroke-width="1.6" stroke-linejoin="round" opacity="0.9"/>
<polyline points="1181.0,217.4 1217.3,220.7 1250.2,220.7 1263.4,210.8" fill="none" stroke="#e78ea1" stroke-width="1.6" stroke-linejoin="round" opacity="0.9"/>
<polyline points="1243.6,92.2 1256.8,108.7 1260.1,138.3 1256.8,171.3 1260.1,204.2 1256.8,256.9" fill="none" stroke="#e78ea1" stroke-width="1.6" stroke-linejoin="round" opacity="0.9"/>
<polyline points="1181.0,217.4 1177.8,250.3 1184.3,273.1" fill="none" stroke="#e78ea1" stroke-width="1.6" stroke-linejoin="round" opacity="0.9"/>
<polyline points="1233.7,98.8 1266.0,75.8" fill="none" stroke="#e78ea1" stroke-width="1.6" stroke-linejoin="round" opacity="0.9"/>
<polyline points="480.0,42.5 508.4,33.1 541.4,28.4 574.5,14.2 602.9,9.5" fill="none" stroke="#e995a6" stroke-width="1.1" stroke-linejoin="round" opacity="0.7"/>
<polyline points="508.4,61.4 555.6,56.7 598.2,52.0 645.4,47.3 702.2,52.0" fill="none" stroke="#e995a6" stroke-width="1.1" stroke-linejoin="round" opacity="0.7"/>
<polyline points="517.8,85.1 565.1,75.6 602.9,66.2 636.0,56.7" fill="none" stroke="#e995a6" stroke-width="1.1" stroke-linejoin="round" opacity="0.7"/>
<polyline points="574.5,94.5 621.8,94.5 669.1,99.3 706.9,94.5" fill="none" stroke="#e995a6" stroke-width="1.1" stroke-linejoin="round" opacity="0.7"/>
<polyline points="636.0,108.7 645.4,132.3 659.6,151.3 678.5,165.4" fill="none" stroke="#e995a6" stroke-width="1.1" stroke-linejoin="round" opacity="0.7"/>
<polyline points="678.5,94.5 692.7,118.2 702.2,141.8 716.3,165.4 725.8,189.1" fill="none" stroke="#e995a6" stroke-width="1.1" stroke-linejoin="round" opacity="0.7"/>
<polyline points="706.9,61.4 730.5,70.9 754.2,75.6 773.1,94.5 792.0,118.2" fill="none" stroke="#e995a6" stroke-width="1.1" stroke-linejoin="round" opacity="0.7"/>
<polyline points="744.7,37.8 773.1,28.4 810.9,18.9" fill="none" stroke="#e995a6" stroke-width="1.1" stroke-linejoin="round" opacity="0.7"/>
<polyline points="810.9,18.9 806.1,56.7 810.9,94.5 806.1,141.8" fill="none" stroke="#e995a6" stroke-width="1.1" stroke-linejoin="round" opacity="0.7"/>
<polyline points="763.6,118.2 787.2,151.3 810.9,156.0 839.2,141.8 867.6,132.3" fill="none" stroke="#e995a6" stroke-width="1.1" stroke-linejoin="round" opacity="0.7"/>
<polyline points="810.9,156.0 820.3,189.1 829.8,222.2 839.2,245.8" fill="none" stroke="#e995a6" stroke-width="1.1" stroke-linejoin="round" opacity="0.7"/>
<polyline points="844.0,89.8 881.8,104.0 905.4,122.9 929.0,127.6" fill="none" stroke="#e995a6" stroke-width="1.1" stroke-linejoin="round" opacity="0.7"/>
<polyline points="896.0,47.3 905.4,70.9 891.2,89.8" fill="none" stroke="#e995a6" stroke-width="1.1" stroke-linejoin="round" opacity="0.7"/>
<polyline points="929.0,141.8 905.4,170.2 896.0,198.5 886.5,217.4" fill="none" stroke="#e995a6" stroke-width="1.1" stroke-linejoin="round" opacity="0.7"/>
<polyline points="962.1,132.3 957.4,165.4 952.7,198.5 947.9,217.4" fill="none" stroke="#e995a6" stroke-width="1.1" stroke-linejoin="round" opacity="0.7"/>
<polyline points="999.9,18.9 1009.4,47.3 995.2,75.6 999.9,104.0" fill="none" stroke="#e995a6" stroke-width="1.1" stroke-linejoin="round" opacity="0.7"/>
<polyline points="1023.6,141.8 1047.2,156.0 1075.6,141.8 1120.0,132.3" fill="none" stroke="#e995a6" stroke-width="1.1" stroke-linejoin="round" opacity="0.7"/>
<polyline points="1047.2,198.5 1075.6,208.0 1120.0,212.7" fill="none" stroke="#e995a6" stroke-width="1.1" stroke-linejoin="round" opacity="0.7"/>
<polyline points="1085.0,0.0 1094.5,37.8 1089.7,75.6 1094.5,113.4" fill="none" stroke="#e995a6" stroke-width="1.1" stroke-linejoin="round" opacity="0.7"/>
<polyline points="480.0,151.3 508.4,141.8 536.7,151.3 574.5,165.4" fill="none" stroke="#e995a6" stroke-width="1.1" stroke-linejoin="round" opacity="0.7"/>
<polyline points="527.3,189.1 555.6,212.7 574.5,236.3 598.2,255.2" fill="none" stroke="#e995a6" stroke-width="1.1" stroke-linejoin="round" opacity="0.7"/>
<polyline points="621.8,198.5 645.4,217.4 678.5,226.9 716.3,231.6" fill="none" stroke="#e995a6" stroke-width="1.1" stroke-linejoin="round" opacity="0.7"/>
<polyline points="706.9,217.4 744.7,236.3 773.1,245.8 810.9,236.3" fill="none" stroke="#e995a6" stroke-width="1.1" stroke-linejoin="round" opacity="0.7"/>
<polyline points="773.1,179.6 792.0,208.0 810.9,226.9" fill="none" stroke="#e995a6" stroke-width="1.1" stroke-linejoin="round" opacity="0.7"/>
<polyline points="848.7,179.6 867.6,198.5 896.0,208.0" fill="none" stroke="#e995a6" stroke-width="1.1" stroke-linejoin="round" opacity="0.7"/>
<polyline points="839.2,245.8 867.6,255.2 905.4,250.5" fill="none" stroke="#e995a6" stroke-width="1.1" stroke-linejoin="round" opacity="0.7"/>
<polyline points="0.0,9.9 9.9,6.6 33.1,0.0" fill="none" stroke="#f0ad94" stroke-width="1.1" stroke-linejoin="round" opacity="0.85"/>
<polyline points="0.0,16.5 6.6,19.8 13.2,36.4 21.5,47.9 21.5,62.8 23.0,72.0" fill="none" stroke="#f0ad94" stroke-width="1.1" stroke-linejoin="round" opacity="0.85"/>
<polyline points="0.0,47.9 21.5,49.6 33.1,43.0 49.6,36.4 74.4,31.4 79.3,28.1 92.6,21.5" fill="none" stroke="#f0ad94" stroke-width="1.1" stroke-linejoin="round" opacity="0.85"/>
<polyline points="44.6,0.0 44.6,28.1 54.5,39.7 61.2,47.9" fill="none" stroke="#f0ad94" stroke-width="1.1" stroke-linejoin="round" opacity="0.85"/>
<polyline points="47.9,29.8 74.4,13.2 79.3,3.3 82.6,0.0" fill="none" stroke="#f0ad94" stroke-width="1.1" stroke-linejoin="round" opacity="0.85"/>
<polyline points="79.3,3.3 92.6,13.2 105.8,24.8 119.0,28.1 135.5,33.1 143.8,31.4 148.8,8.3 160.0,6.6" fill="none" stroke="#f0ad94" stroke-width="1.1" stroke-linejoin="round" opacity="0.85"/>
<polyline points="119.0,0.0 115.7,9.9 119.0,23.1" fill="none" stroke="#f0ad94" stroke-width="1.1" stroke-linejoin="round" opacity="0.85"/>
<polyline points="160.0,9.9 181.5,9.9 201.3,11.6 219.5,13.2 236.0,13.2 252.6,9.9 275.7,3.3 302.1,0.0" fill="none" stroke="#f0ad94" stroke-width="1.1" stroke-linejoin="round" opacity="0.85"/>
<polyline points="199.7,0.0 198.0,18.2 194.7,28.1 193.1,33.1" fill="none" stroke="#f0ad94" stroke-width="1.1" stroke-linejoin="round" opacity="0.85"/>
<polyline points="212.9,0.0 214.5,21.5" fill="none" stroke="#f0ad94" stroke-width="1.1" stroke-linejoin="round" opacity="0.85"/>
<polyline points="236.0,0.0 237.7,13.2 236.0,19.8 250.9,31.4 254.2,38.0" fill="none" stroke="#f0ad94" stroke-width="1.1" stroke-linejoin="round" opacity="0.85"/>
<polyline points="265.8,0.0 275.7,23.1 279.0,29.8" fill="none" stroke="#f0ad94" stroke-width="1.1" stroke-linejoin="round" opacity="0.85"/>
<polyline points="302.1,0.0 303.8,9.9 313.7,13.2" fill="none" stroke="#f0ad94" stroke-width="1.1" stroke-linejoin="round" opacity="0.85"/>
<polyline points="160.0,31.4 179.8,29.8 196.4,30.6" fill="none" stroke="#f0ad94" stroke-width="1.1" stroke-linejoin="round" opacity="0.85"/>
<polyline points="254.2,33.1 275.7,31.4 285.6,24.8 302.1,13.2 318.7,6.6" fill="none" stroke="#f0ad94" stroke-width="1.1" stroke-linejoin="round" opacity="0.85"/>
<polyline points="367.9,47.9 387.4,46.1" fill="none" stroke="#f0ad94" stroke-width="1.1" stroke-linejoin="round" opacity="0.85"/>
<polyline points="398.0,49.6 415.7,47.9 426.3,49.6" fill="none" stroke="#f0ad94" stroke-width="1.1" stroke-linejoin="round" opacity="0.85"/>
<polyline points="415.7,42.5 426.3,49.6" fill="none" stroke="#f0ad94" stroke-width="1.1" stroke-linejoin="round" opacity="0.85"/>
<polyline points="444.1,47.9 454.7,47.9" fill="none" stroke="#f0ad94" stroke-width="1.1" stroke-linejoin="round" opacity="0.85"/>
<polyline points="440.5,79.8 441.1,80.0" fill="none" stroke="#f0ad94" stroke-width="1.1" stroke-linejoin="round" opacity="0.85"/>
<polyline points="470.7,67.4 469.1,80.0" fill="none" stroke="#f0ad94" stroke-width="1.1" stroke-linejoin="round" opacity="0.85"/>
<polyline points="377.7,87.6 402.8,95.1" fill="none" stroke="#f0ad94" stroke-width="1.1" stroke-linejoin="round" opacity="0.85"/>
<polyline points="425.4,95.1 438.0,97.6" fill="none" stroke="#f0ad94" stroke-width="1.1" stroke-linejoin="round" opacity="0.85"/>
<polyline points="402.8,213.1 440.5,225.6" fill="none" stroke="#f0ad94" stroke-width="1.1" stroke-linejoin="round" opacity="0.85"/>
<polyline points="468.1,220.6 483.2,200.5" fill="none" stroke="#f0ad94" stroke-width="1.1" stroke-linejoin="round" opacity="0.85"/>
<polyline points="510.8,228.2 533.4,208.1" fill="none" stroke="#f0ad94" stroke-width="1.1" stroke-linejoin="round" opacity="0.85"/>
<polyline points="455.5,230.7 468.1,225.6" fill="none" stroke="#f0ad94" stroke-width="1.1" stroke-linejoin="round" opacity="0.85"/>
<polyline points="470.6,255.8 495.7,240.7" fill="none" stroke="#f0ad94" stroke-width="1.1" stroke-linejoin="round" opacity="0.85"/>
<polyline points="505.7,170.4 507.0,190.5" fill="none" stroke="#f0ad94" stroke-width="1.1" stroke-linejoin="round" opacity="0.85"/>
<polyline points="440.5,225.6 445.5,245.7" fill="none" stroke="#f0ad94" stroke-width="1.1" stroke-linejoin="round" opacity="0.85"/>
<polyline points="447.3,0.0 452.2,16.5 451.4,33.0 460.5,38.0 468.8,48.0 480.0,50.4 496.5,41.3 506.4,52.9 508.0,69.4 521.3,77.7 536.2,79.3 541.2,86.0 542.8,102.5 546.9,99.4 558.7,98.0 570.5,96.5 579.4,105.3 588.3,109.8 582.4,126.0 588.3,133.4 582.4,143.7 589.7,148.9 607.5,151.9 614.9,149.7 626.7,145.2 631.1,127.5 639.2,122.3 644.4,126.0 637.0,149.7 642.9,157.0 641.4,171.8 654.7,171.8 662.1,176.2 669.5,182.1 679.8,188.1 682.8,195.4 693.1,207.3 703.5,204.3 716.8,204.3 728.6,195.4 727.1,177.7 718.3,160.0 730.1,140.8 737.5,121.6 741.0,120.0" fill="none" stroke="#ab93b3" stroke-width="2" stroke-linejoin="round" opacity="0.9"/>
<polyline points="640.0,41.3 650.0,43.0 669.8,49.6 694.5,46.3 712.7,43.0 711.0,26.4 717.7,13.2 721.0,0.0" fill="none" stroke="#ab93b3" stroke-width="2" stroke-linejoin="round" opacity="0.9"/>
<polyline points="727.6,0.0 729.3,9.9 739.2,14.9 744.0,33.0 742.5,46.3 755.7,54.5 760.7,61.2 755.7,72.7 765.6,79.3 769.0,92.6 772.2,99.2 755.7,114.0 741.0,120.0" fill="none" stroke="#ab93b3" stroke-width="2" stroke-linejoin="round" opacity="0.9"/>
<polyline points="741.0,120.0 752.0,130.0 748.0,150.0 760.0,170.0 752.0,185.0 762.0,196.0 760.0,206.0 740.0,210.0 728.6,195.4" fill="none" stroke="#ab93b3" stroke-width="2" stroke-linejoin="round" opacity="0.9"/>
<polyline points="760.0,206.0 780.0,212.0 800.0,243.7 809.8,246.9 823.0,251.9 826.3,258.4 842.7,256.8 854.2,251.9 862.4,251.9 868.9,261.7 878.8,266.6 891.9,268.3 905.0,269.9 914.9,273.0" fill="none" stroke="#ab93b3" stroke-width="2" stroke-linejoin="round" opacity="0.9"/>
<polyline points="1243.6,62.6 1250.2,79.1 1250.2,95.5 1256.8,108.7 1263.4,118.6 1266.0,131.8" fill="none" stroke="#ab93b3" stroke-width="2" stroke-linejoin="round" opacity="0.9"/>
<circle cx="119" cy="2.8" r="2.2" fill="#fff" stroke="#666" stroke-width="0.9"/>
<circle cx="111" cy="24" r="2.2" fill="#fff" stroke="#666" stroke-width="0.9"/>
<circle cx="138.8" cy="36.7" r="2.2" fill="#fff" stroke="#666" stroke-width="0.9"/>
<circle cx="217.9" cy="35.2" r="2.2" fill="#fff" stroke="#666" stroke-width="0.9"/>
<circle cx="387.4" cy="17.4" r="2.2" fill="#fff" stroke="#666" stroke-width="0.9"/>
<circle cx="431.6" cy="6.3" r="2.2" fill="#fff" stroke="#666" stroke-width="0.9"/>
<circle cx="240" cy="210.9" r="2.2" fill="#fff" stroke="#666" stroke-width="0.9"/>
<circle cx="323" cy="217.5" r="2.2" fill="#fff" stroke="#666" stroke-width="0.9"/>
<circle cx="424.3" cy="158" r="2.2" fill="#fff" stroke="#666" stroke-width="0.9"/>
<circle cx="506.4" cy="34.4" r="2.2" fill="#fff" stroke="#666" stroke-width="0.9"/>
<circle cx="489.9" cy="59.2" r="2.2" fill="#fff" stroke="#666" stroke-width="0.9"/>
<circle cx="517.2" cy="63.6" r="2.2" fill="#fff" stroke="#666" stroke-width="0.9"/>
<circle cx="565.1" cy="83.5" r="2.2" fill="#fff" stroke="#666" stroke-width="0.9"/>
<circle cx="712.4" cy="30.6" r="2.2" fill="#fff" stroke="#666" stroke-width="0.9"/>
<circle cx="745.8" cy="41" r="2.2" fill="#fff" stroke="#666" stroke-width="0.9"/>
<circle cx="571.7" cy="241" r="2.2" fill="#fff" stroke="#666" stroke-width="0.9"/>
<circle cx="753" cy="260" r="2.2" fill="#fff" stroke="#666" stroke-width="0.9"/>
<circle cx="793.3" cy="174.4" r="2.2" fill="#fff" stroke="#666" stroke-width="0.9"/>
<circle cx="820.8" cy="19.4" r="2.2" fill="#fff" stroke="#666" stroke-width="0.9"/>
<circle cx="831.4" cy="46.6" r="2.2" fill="#fff" stroke="#666" stroke-width="0.9"/>
<circle cx="909.9" cy="27.9" r="2.2" fill="#fff" stroke="#666" stroke-width="0.9"/>
<circle cx="873.8" cy="97.4" r="2.2" fill="#fff" stroke="#666" stroke-width="0.9"/>
<circle cx="965.5" cy="129.6" r="2.2" fill="#fff" stroke="#666" stroke-width="0.9"/>
<circle cx="1071.3" cy="171" r="2.2" fill="#fff" stroke="#666" stroke-width="0.9"/>
<circle cx="1162.6" cy="196.6" r="2.2" fill="#fff" stroke="#666" stroke-width="0.9"/>
<circle cx="1168.3" cy="215.5" r="2.2" fill="#fff" stroke="#666" stroke-width="0.9"/>
<circle cx="947.7" cy="210.8" r="2.2" fill="#fff" stroke="#666" stroke-width="0.9"/>
<circle cx="966.6" cy="221.5" r="2.2" fill="#fff" stroke="#666" stroke-width="0.9"/>
<circle cx="823" cy="244.5" r="2.2" fill="#fff" stroke="#666" stroke-width="0.9"/>
<circle cx="888.6" cy="217.1" r="2.2" fill="#fff" stroke="#666" stroke-width="0.9"/>
<circle cx="1010.9" cy="256" r="2.2" fill="#fff" stroke="#666" stroke-width="0.9"/>
<circle cx="78.5" cy="2" r="2.2" fill="#fff" stroke="#666" stroke-width="0.9"/>
<circle cx="15.1" cy="216.3" r="3.6" fill="#fff" stroke="#555" stroke-width="1"/><circle cx="15.1" cy="216.3" r="1.4" fill="#555"/>
<circle cx="749.5" cy="194.9" r="3.6" fill="#fff" stroke="#555" stroke-width="1"/><circle cx="749.5" cy="194.9" r="1.4" fill="#555"/>
<text x="122.5" y="6" font-size="10" font-style="normal" fill="#505050" textLength="49.4" lengthAdjust="spacingAndGlyphs" stroke="#fff" stroke-opacity="0.6" stroke-width="1.6" paint-order="stroke" stroke-linejoin="round">Winchester</text>
<text x="81.8" y="20.2" font-size="10" font-style="normal" fill="#505050" textLength="59.5" lengthAdjust="spacingAndGlyphs" stroke="#fff" stroke-opacity="0.6" stroke-width="1.6" paint-order="stroke" stroke-linejoin="round">Southampton</text>
<text x="113.7" y="47.1" font-size="10" font-style="normal" fill="#505050" textLength="50.3" lengthAdjust="spacingAndGlyphs" stroke="#fff" stroke-opacity="0.6" stroke-width="1.6" paint-order="stroke" stroke-linejoin="round">Portsmouth</text>
<text x="199.7" y="31.4" font-size="10" font-style="normal" fill="#505050" textLength="37.7" lengthAdjust="spacingAndGlyphs" stroke="#fff" stroke-opacity="0.6" stroke-width="1.6" paint-order="stroke" stroke-linejoin="round">Brighton</text>
<text x="290.6" y="43" font-size="10.5" font-style="italic" fill="#6a8cc0" textLength="40.1" lengthAdjust="spacingAndGlyphs" stroke="#fff" stroke-opacity="0.6" stroke-width="1.6" paint-order="stroke" stroke-linejoin="round">Strait of</text>
<text x="293" y="56.2" font-size="10.5" font-style="italic" fill="#6a8cc0" textLength="35.0" lengthAdjust="spacingAndGlyphs" stroke="#fff" stroke-opacity="0.6" stroke-width="1.6" paint-order="stroke" stroke-linejoin="round">Dover /</text>
<text x="293.9" y="69.4" font-size="10.5" font-style="italic" fill="#6a8cc0" textLength="32.7" lengthAdjust="spacingAndGlyphs" stroke="#fff" stroke-opacity="0.6" stroke-width="1.6" paint-order="stroke" stroke-linejoin="round">Pas de</text>
<text x="295.5" y="82.6" font-size="10.5" font-style="italic" fill="#6a8cc0" textLength="29.5" lengthAdjust="spacingAndGlyphs" stroke="#fff" stroke-opacity="0.6" stroke-width="1.6" paint-order="stroke" stroke-linejoin="round">Calais</text>
<text x="375.4" y="13.2" font-size="10" font-style="normal" fill="#505050" textLength="24.6" lengthAdjust="spacingAndGlyphs" stroke="#fff" stroke-opacity="0.6" stroke-width="1.6" paint-order="stroke" stroke-linejoin="round">Calais</text>
<text x="407.6" y="2.5" font-size="10" font-style="normal" fill="#505050" textLength="47.4" lengthAdjust="spacingAndGlyphs" stroke="#fff" stroke-opacity="0.6" stroke-width="1.6" paint-order="stroke" stroke-linejoin="round">Dunkerque</text>
<text x="0" y="161.3" font-size="13" font-style="italic" fill="#5d83bd" textLength="73.9" lengthAdjust="spacingAndGlyphs" stroke="#fff" stroke-opacity="0.6" stroke-width="1.6" paint-order="stroke" stroke-linejoin="round">sh Channel /</text>
<text x="4.9" y="178" font-size="13" font-style="italic" fill="#5d83bd" textLength="48.5" lengthAdjust="spacingAndGlyphs" stroke="#fff" stroke-opacity="0.6" stroke-width="1.6" paint-order="stroke" stroke-linejoin="round">Manche</text>
<text x="0" y="204.3" font-size="12" font-style="normal" fill="#7f667f" textLength="44.3" lengthAdjust="spacingAndGlyphs" stroke="#fff" stroke-opacity="0.6" stroke-width="1.6" paint-order="stroke" stroke-linejoin="round">uernsey</text>
<text x="0" y="230.6" font-size="10.5" font-style="normal" fill="#505050" textLength="48.4" lengthAdjust="spacingAndGlyphs" stroke="#fff" stroke-opacity="0.6" stroke-width="1.6" paint-order="stroke" stroke-linejoin="round">Peter Port</text>
<text x="26.3" y="259.3" font-size="12" font-style="normal" fill="#7f667f" textLength="36.1" lengthAdjust="spacingAndGlyphs" stroke="#fff" stroke-opacity="0.6" stroke-width="1.6" paint-order="stroke" stroke-linejoin="round">Jersey</text>
<text x="165.7" y="209.2" font-size="9.5" font-style="italic" fill="#6a8cc0" textLength="30.4" lengthAdjust="spacingAndGlyphs" stroke="#fff" stroke-opacity="0.6" stroke-width="1.6" paint-order="stroke" stroke-linejoin="round">Baie de</text>
<text x="164.9" y="220.7" font-size="9.5" font-style="italic" fill="#6a8cc0" textLength="32.1" lengthAdjust="spacingAndGlyphs" stroke="#fff" stroke-opacity="0.6" stroke-width="1.6" paint-order="stroke" stroke-linejoin="round">la Seine</text>
<text x="220.8" y="207.3" font-size="10" font-style="normal" fill="#505050" textLength="37.4" lengthAdjust="spacingAndGlyphs" stroke="#fff" stroke-opacity="0.6" stroke-width="1.6" paint-order="stroke" stroke-linejoin="round">Le Havre</text>
<text x="207.6" y="261" font-size="11" font-style="italic" fill="#8a6c93" textLength="50.6" lengthAdjust="spacingAndGlyphs" stroke="#fff" stroke-opacity="0.6" stroke-width="1.6" paint-order="stroke" stroke-linejoin="round">Normandie</text>
<text x="309.4" y="213.8" font-size="10.5" font-style="normal" fill="#505050" textLength="27.0" lengthAdjust="spacingAndGlyphs" stroke="#fff" stroke-opacity="0.6" stroke-width="1.6" paint-order="stroke" stroke-linejoin="round">Rouen</text>
<text x="408.7" y="154.2" font-size="10.5" font-style="normal" fill="#505050" textLength="32.5" lengthAdjust="spacingAndGlyphs" stroke="#fff" stroke-opacity="0.6" stroke-width="1.6" paint-order="stroke" stroke-linejoin="round">Amiens</text>
<text x="451.4" y="144.4" font-size="11" font-style="italic" fill="#8a6c93" textLength="41.6" lengthAdjust="spacingAndGlyphs" stroke="#fff" stroke-opacity="0.6" stroke-width="1.6" paint-order="stroke" stroke-linejoin="round">Hauts-de-</text>
<text x="457" y="156.7" font-size="11" font-style="italic" fill="#8a6c93" textLength="30.0" lengthAdjust="spacingAndGlyphs" stroke="#fff" stroke-opacity="0.6" stroke-width="1.6" paint-order="stroke" stroke-linejoin="round">France</text>
<text x="491.6" y="30.6" font-size="10.5" font-style="normal" fill="#505050" textLength="31.7" lengthAdjust="spacingAndGlyphs" stroke="#fff" stroke-opacity="0.6" stroke-width="1.6" paint-order="stroke" stroke-linejoin="round">Kortrijk</text>
<text x="480.8" y="54.5" font-size="12" font-style="normal" fill="#505050" textLength="19.0" lengthAdjust="spacingAndGlyphs" stroke="#fff" stroke-opacity="0.6" stroke-width="1.6" paint-order="stroke" stroke-linejoin="round">Lille</text>
<text x="501.5" y="73.6" font-size="10.5" font-style="normal" fill="#505050" textLength="32.2" lengthAdjust="spacingAndGlyphs" stroke="#fff" stroke-opacity="0.6" stroke-width="1.6" paint-order="stroke" stroke-linejoin="round">Tournai</text>
<text x="537.9" y="86.8" font-size="10.5" font-style="normal" fill="#505050" textLength="23.1" lengthAdjust="spacingAndGlyphs" stroke="#fff" stroke-opacity="0.6" stroke-width="1.6" paint-order="stroke" stroke-linejoin="round">Mons</text>
<text x="572.6" y="10.7" font-size="12" font-style="normal" fill="#505050" textLength="27.4" lengthAdjust="spacingAndGlyphs" stroke="#fff" stroke-opacity="0.6" stroke-width="1.6" paint-order="stroke" stroke-linejoin="round">Brux</text>
<text x="580" y="24.8" font-size="12" font-style="normal" fill="#505050" textLength="38.0" lengthAdjust="spacingAndGlyphs" stroke="#fff" stroke-opacity="0.6" stroke-width="1.6" paint-order="stroke" stroke-linejoin="round">Brussel</text>
<text x="576.7" y="69.4" font-size="13.5" font-style="normal" fill="#8b6b93" textLength="111.3" lengthAdjust="spacingAndGlyphs" stroke="#fff" stroke-opacity="0.6" stroke-width="1.6" paint-order="stroke" stroke-linejoin="round">België / Belgique /</text>
<text x="609.8" y="85.1" font-size="13.5" font-style="normal" fill="#8b6b93" textLength="44.2" lengthAdjust="spacingAndGlyphs" stroke="#fff" stroke-opacity="0.6" stroke-width="1.6" paint-order="stroke" stroke-linejoin="round">Belgien</text>
<text x="663" y="33.9" font-size="10.5" font-style="normal" fill="#505050" textLength="44.8" lengthAdjust="spacingAndGlyphs" stroke="#fff" stroke-opacity="0.6" stroke-width="1.6" paint-order="stroke" stroke-linejoin="round">Maastricht</text>
<text x="730" y="37.2" font-size="10.5" font-style="normal" fill="#505050" textLength="31.5" lengthAdjust="spacingAndGlyphs" stroke="#fff" stroke-opacity="0.6" stroke-width="1.6" paint-order="stroke" stroke-linejoin="round">Aachen</text>
<text x="701" y="62" font-size="10.5" font-style="normal" fill="#505050" textLength="28.3" lengthAdjust="spacingAndGlyphs" stroke="#fff" stroke-opacity="0.6" stroke-width="1.6" paint-order="stroke" stroke-linejoin="round">Liège</text>
<text x="688" y="126.4" font-size="11" font-style="italic" fill="#8a6c93" textLength="18.5" lengthAdjust="spacingAndGlyphs" stroke="#fff" stroke-opacity="0.6" stroke-width="1.6" paint-order="stroke" stroke-linejoin="round">lonie</text>
<text x="711.7" y="173.6" font-size="13" font-style="normal" fill="#8b6b93" textLength="68.1" lengthAdjust="spacingAndGlyphs" stroke="#fff" stroke-opacity="0.6" stroke-width="1.6" paint-order="stroke" stroke-linejoin="round">Lëtzebuerg</text>
<text x="716.4" y="210.3" font-size="12" font-style="normal" fill="#505050" textLength="66.2" lengthAdjust="spacingAndGlyphs" stroke="#fff" stroke-opacity="0.6" stroke-width="1.6" paint-order="stroke" stroke-linejoin="round">Luxembourg</text>
<text x="559.2" y="251.7" font-size="10.5" font-style="normal" fill="#505050" textLength="26.0" lengthAdjust="spacingAndGlyphs" stroke="#fff" stroke-opacity="0.6" stroke-width="1.6" paint-order="stroke" stroke-linejoin="round">Reims</text>
<text x="743.6" y="269.4" font-size="10.5" font-style="normal" fill="#505050" textLength="20.1" lengthAdjust="spacingAndGlyphs" stroke="#fff" stroke-opacity="0.6" stroke-width="1.6" paint-order="stroke" stroke-linejoin="round">Metz</text>
<text x="783.7" y="185.5" font-size="10" font-style="normal" fill="#505050" textLength="18.8" lengthAdjust="spacingAndGlyphs" stroke="#fff" stroke-opacity="0.6" stroke-width="1.6" paint-order="stroke" stroke-linejoin="round">Trier</text>
<text x="809" y="14.7" font-size="12" font-style="normal" fill="#505050" textLength="22.2" lengthAdjust="spacingAndGlyphs" stroke="#fff" stroke-opacity="0.6" stroke-width="1.6" paint-order="stroke" stroke-linejoin="round">Köln</text>
<text x="820.8" y="43" font-size="10.5" font-style="normal" fill="#505050" textLength="22.5" lengthAdjust="spacingAndGlyphs" stroke="#fff" stroke-opacity="0.6" stroke-width="1.6" paint-order="stroke" stroke-linejoin="round">Bonn</text>
<text x="895.7" y="24.1" font-size="10" font-style="normal" fill="#505050" textLength="29.1" lengthAdjust="spacingAndGlyphs" stroke="#fff" stroke-opacity="0.6" stroke-width="1.6" paint-order="stroke" stroke-linejoin="round">Siegen</text>
<text x="856.7" y="94.1" font-size="10.5" font-style="normal" fill="#505050" textLength="34.3" lengthAdjust="spacingAndGlyphs" stroke="#fff" stroke-opacity="0.6" stroke-width="1.6" paint-order="stroke" stroke-linejoin="round">Koblenz</text>
<text x="984" y="76.1" font-size="11" font-style="italic" fill="#8a6c93" textLength="31.6" lengthAdjust="spacingAndGlyphs" stroke="#fff" stroke-opacity="0.6" stroke-width="1.6" paint-order="stroke" stroke-linejoin="round">Hessen</text>
<text x="932.4" y="141.7" font-size="12" font-style="normal" fill="#505050" textLength="67.4" lengthAdjust="spacingAndGlyphs" stroke="#fff" stroke-opacity="0.6" stroke-width="1.6" paint-order="stroke" stroke-linejoin="round">Frankfurt am</text>
<text x="953.2" y="156.4" font-size="12" font-style="normal" fill="#505050" textLength="25.3" lengthAdjust="spacingAndGlyphs" stroke="#fff" stroke-opacity="0.6" stroke-width="1.6" paint-order="stroke" stroke-linejoin="round">Main</text>
<text x="821.7" y="146.5" font-size="11" font-style="italic" fill="#8a6c93" textLength="48.0" lengthAdjust="spacingAndGlyphs" stroke="#fff" stroke-opacity="0.6" stroke-width="1.6" paint-order="stroke" stroke-linejoin="round">Rheinland-</text>
<text x="835.5" y="158.7" font-size="11" font-style="italic" fill="#8a6c93" textLength="21.2" lengthAdjust="spacingAndGlyphs" stroke="#fff" stroke-opacity="0.6" stroke-width="1.6" paint-order="stroke" stroke-linejoin="round">Pfalz</text>
<text x="924.8" y="207.4" font-size="10.5" font-style="normal" fill="#505050" textLength="46.6" lengthAdjust="spacingAndGlyphs" stroke="#fff" stroke-opacity="0.6" stroke-width="1.6" paint-order="stroke" stroke-linejoin="round">Mannheim</text>
<text x="943" y="232.7" font-size="10.5" font-style="normal" fill="#505050" textLength="48.0" lengthAdjust="spacingAndGlyphs" stroke="#fff" stroke-opacity="0.6" stroke-width="1.6" paint-order="stroke" stroke-linejoin="round">Heidelberg</text>
<text x="857.9" y="227.3" font-size="10" font-style="normal" fill="#505050" textLength="61.5" lengthAdjust="spacingAndGlyphs" stroke="#fff" stroke-opacity="0.6" stroke-width="1.6" paint-order="stroke" stroke-linejoin="round">Kaiserslautern</text>
<text x="801.2" y="229.2" font-size="11" font-style="italic" fill="#8a6c93" textLength="40.2" lengthAdjust="spacingAndGlyphs" stroke="#fff" stroke-opacity="0.6" stroke-width="1.6" paint-order="stroke" stroke-linejoin="round">Saarland</text>
<text x="794.9" y="255.2" font-size="10" font-style="normal" fill="#505050" textLength="56.1" lengthAdjust="spacingAndGlyphs" stroke="#fff" stroke-opacity="0.6" stroke-width="1.6" paint-order="stroke" stroke-linejoin="round">Saarbrücken</text>
<text x="1050.6" y="182.4" font-size="10.5" font-style="normal" fill="#505050" textLength="42.5" lengthAdjust="spacingAndGlyphs" stroke="#fff" stroke-opacity="0.6" stroke-width="1.6" paint-order="stroke" stroke-linejoin="round">Würzburg</text>
<text x="990.3" y="266.5" font-size="10" font-style="normal" fill="#505050" textLength="42.6" lengthAdjust="spacingAndGlyphs" stroke="#fff" stroke-opacity="0.6" stroke-width="1.6" paint-order="stroke" stroke-linejoin="round">Heilbronn</text>
<text x="1166" y="23.6" font-size="10.5" font-style="italic" fill="#8a6c93" textLength="46.2" lengthAdjust="spacingAndGlyphs" stroke="#fff" stroke-opacity="0.6" stroke-width="1.6" paint-order="stroke" stroke-linejoin="round">Thüringen</text>
<text x="1143.3" y="193.2" font-size="10" font-style="normal" fill="#505050" textLength="38.8" lengthAdjust="spacingAndGlyphs" stroke="#fff" stroke-opacity="0.6" stroke-width="1.6" paint-order="stroke" stroke-linejoin="round">Erlangen</text>
<text x="1143.3" y="229" font-size="12" font-style="normal" fill="#505050" textLength="50.7" lengthAdjust="spacingAndGlyphs" stroke="#fff" stroke-opacity="0.6" stroke-width="1.6" paint-order="stroke" stroke-linejoin="round">Nürnberg</text>
<rect x="6.2" y="253.3" width="66" height="13.4" rx="3" fill="#5b8fc4" opacity="0.72"/><polyline points="9,254.6 9,263.4 71,263.4 71,254.6" fill="none" stroke="#fff" stroke-width="1.3"/><text x="40" y="262" font-size="8" fill="#fff" text-anchor="middle" opacity="0.85">50 km</text>
<circle cx="558.5" cy="42.1" r="8.1" fill="#ffffff" opacity="0.55"/><circle cx="558.5" cy="42.1" r="7.4" fill="#3799cb"/>
<path d="M556.9 39.9 L559.0 38.7 L559.0 45.1" fill="none" stroke="#fff" stroke-width="1.1"/>
<circle cx="600.3" cy="33" r="8.1" fill="#ffffff" opacity="0.55"/><circle cx="600.3" cy="33" r="7.4" fill="#3799cb"/>
<path d="M598.7 30.8 L600.8 29.6 L600.8 36.0" fill="none" stroke="#fff" stroke-width="1.1"/>
<circle cx="559" cy="94" r="8.1" fill="#ffffff" opacity="0.55"/><circle cx="559" cy="94" r="7.4" fill="#3799cb"/>
<path d="M557.4 91.8 L559.5 90.6 L559.5 97.0" fill="none" stroke="#fff" stroke-width="1.1"/>
<circle cx="636.8" cy="101.7" r="8.1" fill="#ffffff" opacity="0.55"/><circle cx="636.8" cy="101.7" r="7.4" fill="#3799cb"/>
<text x="636.8" y="104.7" font-size="8.5" fill="#fff" text-anchor="middle">6</text>
<circle cx="707.8" cy="58.3" r="8.1" fill="#ffffff" opacity="0.55"/><circle cx="707.8" cy="58.3" r="7.4" fill="#3799cb"/>
<text x="707.8" y="61.3" font-size="8.5" fill="#fff" text-anchor="middle">7</text>
<circle cx="680.6" cy="127.2" r="8.1" fill="#ffffff" opacity="0.55"/><circle cx="680.6" cy="127.2" r="7.4" fill="#3799cb"/>
<text x="680.6" y="130.2" font-size="8.5" fill="#fff" text-anchor="middle">5</text>
<circle cx="670" cy="126.8" r="8.1" fill="#ffffff" opacity="0.55"/><circle cx="670" cy="126.8" r="7.4" fill="#3799cb"/>
<text x="670" y="129.8" font-size="8.5" fill="#fff" text-anchor="middle">2</text>
<circle cx="670" cy="168" r="8.1" fill="#ffffff" opacity="0.55"/><circle cx="670" cy="168" r="7.4" fill="#3799cb"/>
<text x="670" y="171" font-size="8.5" fill="#fff" text-anchor="middle">5</text>
<rect x="1092.6" y="258.4" width="173.4" height="14.6" fill="#fff" opacity="0.75"/>
</svg></div>
<div class="abs" style="left:1168px;top:645px;font:10.67px/13px Liberation Sans,sans-serif;color:#000;white-space:nowrap">© <a href="#">OpenStreetMap</a> contributors.</div>
<div id="tab"><svg class="abs" style="left:31px;top:0" width="21" height="21" viewBox="0 0 21 21"><defs><linearGradient id="tg" x1="0" y1="0" x2="0" y2="1"><stop offset="0" stop-color="#5db3c9"/><stop offset="1" stop-color="#46a7bf"/></linearGradient></defs><circle cx="10" cy="9.6" r="8.6" fill="url(#tg)" stroke="#e9f6f9" stroke-width="1"/><path d="M5 12.3 L10 6.8 L15 12.3 Z" fill="#fff"/></svg></div>
<div id="side"><svg class="abs" style="left:5px;top:11px" width="9" height="8" viewBox="0 0 9 8"><path d="M0.5 4 L4 0.5 L4 2.5 L8.5 2.5 L8.5 5.5 L4 5.5 L4 7.5 Z" fill="#7cc0f0" stroke="#5aa5e0" stroke-width="0.6"/></svg><svg class="abs" style="left:4.5px;top:42px" width="10" height="11" viewBox="0 0 10 11"><rect x="0.6" y="0.6" width="8.8" height="9.6" rx="0.8" fill="#a9b25a" stroke="#151515" stroke-width="1.2"/><rect x="2.4" y="1.2" width="5.2" height="3.6" fill="#c9d08a" stroke="#151515" stroke-width="0.8"/><rect x="1.8" y="6.6" width="6.4" height="3.4" fill="#111"/><rect x="6.4" y="7.6" width="1" height="1.2" fill="#ddd"/></svg></div>
<div class="sel" style="left:59px;width:153px">Natural Earth Administrative<svg width="10" height="7" viewBox="0 0 10 7"><path d="M1 1.2 L5 5.2 L9 1.2" fill="none" stroke="#000" stroke-width="1.8"/></svg></div>
<div class="btn" style="left:215px;width:78px">Browse layers</div>
<div class="sel" style="left:296px;width:20px"><svg width="10" height="7" viewBox="0 0 10 7"><path d="M1 1.2 L5 5.2 L9 1.2" fill="none" stroke="#000" stroke-width="1.8"/></svg></div>
<div class="btn" style="left:319px;width:62px">Add layers</div>
<div class="sel" style="left:384px;width:107px">OpenStreetMap<svg width="10" height="7" viewBox="0 0 10 7"><path d="M1 1.2 L5 5.2 L9 1.2" fill="none" stroke="#000" stroke-width="1.8"/></svg></div>
<div class="btn" style="left:494px;width:85px">Download PNG</div>
<div class="sel" style="left:582px;width:81px">700 X 700<svg width="10" height="7" viewBox="0 0 10 7"><path d="M1 1.2 L5 5.2 L9 1.2" fill="none" stroke="#000" stroke-width="1.8"/></svg></div>
<div id="thead"></div>
<div class="th" style="left:62.5px">Select all</div>
<div class="th" style="left:165.2px">Actions</div>
<div class="th" style="left:221px">Codes</div>
<div class="th" style="left:289px">Taxon</div>
<div class="th" style="left:662px">Type</div>
<div class="th" style="left:699.6px">Sex</div>
<div class="th" style="left:761px">Stage</div>
<div class="th" style="left:823.2px">Building</div>
<div class="th" style="left:886.5px">Floor</div>
<div class="th" style="left:927px">Room</div>
<div class="th" style="left:971.8px">Row</div>
<div class="th" style="left:1007.6px">column</div>
<div class="th" style="left:1061.6px">Shelf</div>
<div class="th" style="left:1101.7px">Container</div>
<div class="th" style="left:1169.6px">Container Storage</div>
<div class="th" style="left:1289px">Loans</div>
<svg class="abs" style="left:112.5px;top:700px" width="10" height="10" viewBox="0 0 10 10"><circle cx="4" cy="4.2" r="2.9" fill="#8fd3e0" stroke="#3fb3c8" stroke-width="0.8"/><path d="M2.3 4.6 Q2.6 2.4 4.4 2" stroke="#fff" stroke-width="1.6" fill="none"/><path d="M4.6 6.3 Q6.4 6 6.6 3.8" stroke="#fff" stroke-width="1.4" fill="none"/><path d="M6.6 7 L9.2 9.2" stroke="#d6f0f5" stroke-width="1.1"/></svg>
<div class="row" style="top:826.4px;height:3px;background:#e9f0f7"></div>
<div class="row" style="top:710.7px;height:39.4px;background:#dfe6ef"></div>
<svg class="abs" style="left:65.5px;top:714.7px" width="11" height="10" viewBox="0 0 11 10"><circle cx="4.3" cy="4" r="3.2" fill="#c5e9f0" stroke="#48bccd" stroke-width="1.5"/><path d="M3 4.6 Q3.2 2.6 4.8 2.2" stroke="#ffffff" stroke-width="1" fill="none"/><path d="M4.2 5.2 L5.8 3.6" stroke="#2eb3c8" stroke-width="1.4"/><path d="M6.4 6.4 L10 9.2" stroke="#35b5c9" stroke-width="2.1"/></svg>
<svg class="abs" style="left:165px;top:715.5px" width="11" height="8" viewBox="0 0 11 8"><ellipse cx="5.5" cy="3.6" rx="5.3" ry="3.4" fill="#7c9f9f"/><path d="M2.2 3.8 Q3 1.6 5 1.6" stroke="#eef4f4" stroke-width="1.2" fill="none"/><path d="M6 5.8 Q8.2 5.6 8.6 3.4" stroke="#eef4f4" stroke-width="1.2" fill="none"/><circle cx="5.5" cy="3.6" r="1.1" fill="#4f7a7a"/></svg>
<svg class="abs" style="left:179px;top:714.1px" width="11" height="11" viewBox="0 0 11 11"><path d="M0.5 0.5 L5 0.5 L6.6 2.3 L6.6 10.3 L0.5 10.3 Z" fill="#e6f4f2" stroke="#9c9c9c" stroke-width="1"/><path d="M1.6 3 L4.4 3 M1.6 5 L4 5" stroke="#9fd6cc" stroke-width="0.8"/><path d="M3.6 8.2 L9.6 2.4" stroke="#5fb3a8" stroke-width="1.7"/></svg>
<svg class="abs" style="left:192px;top:714.1px" width="11" height="12" viewBox="0 0 11 12"><rect x="0.5" y="0.5" width="6.4" height="6.4" fill="#a9dcf8" stroke="#62d3e0" stroke-width="1"/><rect x="4.1" y="4.4" width="6.2" height="6.8" fill="#86cdf3" stroke="#3aa4e6" stroke-width="1"/></svg>
<svg class="abs" style="left:222px;top:713.5px" width="11" height="11" viewBox="0 0 11 11"><circle cx="5.5" cy="5.5" r="5.4" fill="#8a8a8a"/><rect x="4.8" y="4.6" width="1.5" height="4.4" fill="#fff"/><circle cx="5.55" cy="3" r="0.9" fill="#fff"/></svg>
<div class="td" style="left:255px;top:714.6px;font-weight:bold"><a href="#">1</a></div>
<svg class="abs" style="left:289.5px;top:713.7px" width="12" height="12" viewBox="0 0 12 12"><circle cx="6" cy="6" r="5.7" fill="#3c9ea8"/><rect x="5.1" y="5" width="1.9" height="4.6" fill="#fff"/><circle cx="6" cy="3.2" r="1.05" fill="#fff"/></svg>
<div class="td" style="left:305.5px;top:712.2px;font-style:italic"><a href="#">Salamandra salamandra terrestris de la Ville Lacépède, 1788</a></div>
<div class="td" style="left:289.5px;top:725.7px;font-style:italic">valid</div>
<div class="td" style="left:699.6px;top:712.2px">Unknown</div>
<div class="td" style="left:761px;top:712.2px">Adult</div>
<div class="td" style="left:823.2px;top:712.2px">De Vestel</div>
<div class="td" style="left:886.5px;top:712.2px">15</div>
<div class="td" style="left:927px;top:712.2px">15C</div>
<div class="td" style="left:971.8px;top:712.2px">13</div>
<div class="td" style="left:1169.6px;top:712.2px">alcohol</div>
<div class="td" style="left:1289px;top:712.2px;font-weight:bold">0</div>
<div class="row" style="top:750.1px;height:37.8px;background:#e9f0f7"></div>
<svg class="abs" style="left:65.5px;top:754.1px" width="11" height="10" viewBox="0 0 11 10"><circle cx="4.3" cy="4" r="3.2" fill="#c5e9f0" stroke="#48bccd" stroke-width="1.5"/><path d="M3 4.6 Q3.2 2.6 4.8 2.2" stroke="#ffffff" stroke-width="1" fill="none"/><path d="M4.2 5.2 L5.8 3.6" stroke="#2eb3c8" stroke-width="1.4"/><path d="M6.4 6.4 L10 9.2" stroke="#35b5c9" stroke-width="2.1"/></svg>
<svg class="abs" style="left:165px;top:754.9px" width="11" height="8" viewBox="0 0 11 8"><ellipse cx="5.5" cy="3.6" rx="5.3" ry="3.4" fill="#7c9f9f"/><path d="M2.2 3.8 Q3 1.6 5 1.6" stroke="#eef4f4" stroke-width="1.2" fill="none"/><path d="M6 5.8 Q8.2 5.6 8.6 3.4" stroke="#eef4f4" stroke-width="1.2" fill="none"/><circle cx="5.5" cy="3.6" r="1.1" fill="#4f7a7a"/></svg>
<svg class="abs" style="left:179px;top:753.5px" width="11" height="11" viewBox="0 0 11 11"><path d="M0.5 0.5 L5 0.5 L6.6 2.3 L6.6 10.3 L0.5 10.3 Z" fill="#e6f4f2" stroke="#9c9c9c" stroke-width="1"/><path d="M1.6 3 L4.4 3 M1.6 5 L4 5" stroke="#9fd6cc" stroke-width="0.8"/><path d="M3.6 8.2 L9.6 2.4" stroke="#5fb3a8" stroke-width="1.7"/></svg>
<svg class="abs" style="left:192px;top:753.5px" width="11" height="12" viewBox="0 0 11 12"><rect x="0.5" y="0.5" width="6.4" height="6.4" fill="#a9dcf8" stroke="#62d3e0" stroke-width="1"/><rect x="4.1" y="4.4" width="6.2" height="6.8" fill="#86cdf3" stroke="#3aa4e6" stroke-width="1"/></svg>
<svg class="abs" style="left:222px;top:752.9px" width="11" height="11" viewBox="0 0 11 11"><circle cx="5.5" cy="5.5" r="5.4" fill="#8a8a8a"/><rect x="4.8" y="4.6" width="1.5" height="4.4" fill="#fff"/><circle cx="5.55" cy="3" r="0.9" fill="#fff"/></svg>
<div class="td" style="left:255px;top:754.0px;font-weight:bold"><a href="#">1B</a></div>
<svg class="abs" style="left:289.5px;top:753.1px" width="12" height="12" viewBox="0 0 12 12"><circle cx="6" cy="6" r="5.7" fill="#3c9ea8"/><rect x="5.1" y="5" width="1.9" height="4.6" fill="#fff"/><circle cx="6" cy="3.2" r="1.05" fill="#fff"/></svg>
<div class="td" style="left:305.5px;top:751.6px;font-style:italic"><a href="#">Salamandra salamandra terrestris de la Ville Lacépède, 1788</a></div>
<div class="td" style="left:289.5px;top:765.1px;font-style:italic">valid</div>
<div class="td" style="left:699.6px;top:751.6px">Unknown</div>
<div class="td" style="left:761px;top:751.6px">Adult</div>
<div class="td" style="left:823.2px;top:751.6px">De Vestel</div>
<div class="td" style="left:886.5px;top:751.6px">15</div>
<div class="td" style="left:927px;top:751.6px">15C</div>
<div class="td" style="left:971.8px;top:751.6px">13</div>
<div class="td" style="left:1169.6px;top:751.6px">alcohol</div>
<div class="td" style="left:1289px;top:751.6px;font-weight:bold">0</div>
<div class="row" style="top:787.9px;height:38.5px;background:#dfe6ef"></div>
<svg class="abs" style="left:65.5px;top:791.9px" width="11" height="10" viewBox="0 0 11 10"><circle cx="4.3" cy="4" r="3.2" fill="#c5e9f0" stroke="#48bccd" stroke-width="1.5"/><path d="M3 4.6 Q3.2 2.6 4.8 2.2" stroke="#ffffff" stroke-width="1" fill="none"/><path d="M4.2 5.2 L5.8 3.6" stroke="#2eb3c8" stroke-width="1.4"/><path d="M6.4 6.4 L10 9.2" stroke="#35b5c9" stroke-width="2.1"/></svg>
<svg class="abs" style="left:165px;top:792.7px" width="11" height="8" viewBox="0 0 11 8"><ellipse cx="5.5" cy="3.6" rx="5.3" ry="3.4" fill="#7c9f9f"/><path d="M2.2 3.8 Q3 1.6 5 1.6" stroke="#eef4f4" stroke-width="1.2" fill="none"/><path d="M6 5.8 Q8.2 5.6 8.6 3.4" stroke="#eef4f4" stroke-width="1.2" fill="none"/><circle cx="5.5" cy="3.6" r="1.1" fill="#4f7a7a"/></svg>
<svg class="abs" style="left:179px;top:791.3px" width="11" height="11" viewBox="0 0 11 11"><path d="M0.5 0.5 L5 0.5 L6.6 2.3 L6.6 10.3 L0.5 10.3 Z" fill="#e6f4f2" stroke="#9c9c9c" stroke-width="1"/><path d="M1.6 3 L4.4 3 M1.6 5 L4 5" stroke="#9fd6cc" stroke-width="0.8"/><path d="M3.6 8.2 L9.6 2.4" stroke="#5fb3a8" stroke-width="1.7"/></svg>
<svg class="abs" style="left:192px;top:791.3px" width="11" height="12" viewBox="0 0 11 12"><rect x="0.5" y="0.5" width="6.4" height="6.4" fill="#a9dcf8" stroke="#62d3e0" stroke-width="1"/><rect x="4.1" y="4.4" width="6.2" height="6.8" fill="#86cdf3" stroke="#3aa4e6" stroke-width="1"/></svg>
<svg class="abs" style="left:222px;top:790.7px" width="11" height="11" viewBox="0 0 11 11"><circle cx="5.5" cy="5.5" r="5.4" fill="#8a8a8a"/><rect x="4.8" y="4.6" width="1.5" height="4.4" fill="#fff"/><circle cx="5.55" cy="3" r="0.9" fill="#fff"/></svg>
<div class="td" style="left:255px;top:791.8px;font-weight:bold"><a href="#">1C</a></div>
<svg class="abs" style="left:289.5px;top:790.9px" width="12" height="12" viewBox="0 0 12 12"><circle cx="6" cy="6" r="5.7" fill="#3c9ea8"/><rect x="5.1" y="5" width="1.9" height="4.6" fill="#fff"/><circle cx="6" cy="3.2" r="1.05" fill="#fff"/></svg>
<div class="td" style="left:305.5px;top:789.4px;font-style:italic"><a href="#">Salamandra salamandra terrestris de la Ville Lacépède, 1788</a></div>
<div class="td" style="left:289.5px;top:802.9px;font-style:italic">valid</div>
<div class="td" style="left:699.6px;top:789.4px">Unknown</div>
<div class="td" style="left:761px;top:789.4px">Adult</div>
<div class="td" style="left:823.2px;top:789.4px">De Vestel</div>
<div class="td" style="left:886.5px;top:789.4px">15</div>
<div class="td" style="left:927px;top:789.4px">15C</div>
<div class="td" style="left:971.8px;top:789.4px">13</div>
<div class="td" style="left:1169.6px;top:789.4px">alcohol</div>
<div class="td" style="left:1289px;top:789.4px;font-weight:bold">0</div>
</body></html>
